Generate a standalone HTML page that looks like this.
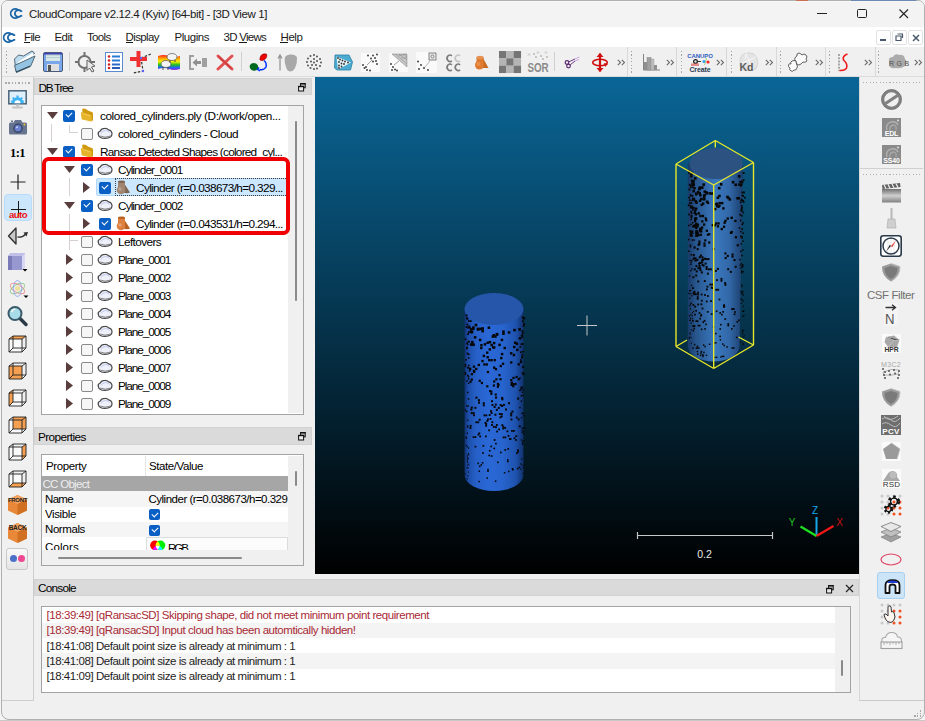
<!DOCTYPE html><html><head><meta charset="utf-8"><style>
*{margin:0;padding:0;box-sizing:border-box}
html,body{width:925px;height:721px;overflow:hidden;background:#f4f4f4}
body{font-family:"Liberation Sans",sans-serif;font-size:11px;color:#000;position:relative;letter-spacing:-0.1px}
.a{position:absolute}
.t{position:absolute;white-space:nowrap;line-height:13px}
.hdr{position:absolute;background:#dadada;border:1px solid #d2d2d2}
svg{position:absolute;overflow:visible}
.cb{position:absolute;width:12px;height:12px;border-radius:2px}
.cbon{background:#0a5fc4}
.cboff{background:#f6f6f6;border:1px solid #8a8a8a}
.cbon:after{content:"";position:absolute;left:3px;top:2.5px;width:5px;height:3px;border-left:1.3px solid #fff;border-bottom:1.3px solid #fff;transform:rotate(-45deg)}
.chev{position:absolute;font-size:12px;color:#505050;letter-spacing:-2px}
</style></head><body>
<div class="a" style="left:0;top:720px;width:925px;height:1px;background:#c8c8c8"></div>
<div class="a" style="left:1px;top:0;width:924px;height:720px;background:#f0f0f0;border:1px solid #b0b0b0;border-radius:7px 7px 8px 8px"></div>
<div class="a" style="left:2px;top:1px;width:922px;height:26px;background:#f3f3f3;border-radius:6px 6px 0 0;border-top:1px solid #f8f8f8"></div>
<div class="a" style="left:796px;top:0;width:12px;height:1px;background:#c87050"></div>
<div class="a" style="left:851px;top:0;width:65px;height:1px;background:#6a88b0"></div>
<div class="t" style="left:29px;top:8px;font-size:11.5px;color:#1a1a1a;letter-spacing:-0.400px;">CloudCompare v2.12.4 (Kyiv) [64-bit] - [3D View 1]</div>
<svg style="left:10px;top:8px" width="13" height="11" viewBox="0 0 13 11"><path d="M8.09 2.05 A4.5 4.5 0 1 0 8.09 8.95" fill="none" stroke="#1a66a8" stroke-width="1.8"/><path d="M12.2 3.03 L10.87 3.03 A3.5 3.5 0 1 0 10.87 7.97 L12.2 7.97" fill="none" stroke="#1a66a8" stroke-width="1.8"/></svg>
<div class="a" style="left:817px;top:13px;width:9.5px;height:1.3px;background:#222"></div>
<div class="a" style="left:857px;top:9px;width:10px;height:9px;border:1.5px solid #222;border-radius:1.5px"></div>
<svg style="left:899px;top:9px" width="9.5" height="9.5"><path d="M0.5 0.5 L9 9 M9 0.5 L0.5 9" stroke="#222" stroke-width="1.1"/></svg>
<div class="a" style="left:2px;top:27px;width:922px;height:20px;background:#fff"></div>
<svg style="left:3px;top:31.5px" width="13" height="11" viewBox="0 0 13 11"><path d="M8.09 2.05 A4.5 4.5 0 1 0 8.09 8.95" fill="none" stroke="#1a66a8" stroke-width="1.8"/><path d="M12.2 3.03 L10.87 3.03 A3.5 3.5 0 1 0 10.87 7.97 L12.2 7.97" fill="none" stroke="#1a66a8" stroke-width="1.8"/></svg>
<div class="t" style="left:24px;top:31px;font-size:11.5px;color:#1a1a1a;letter-spacing:-0.633px;">File</div>
<div class="t" style="left:54.5px;top:31px;font-size:11.5px;color:#1a1a1a;letter-spacing:-0.579px;">Edit</div>
<div class="t" style="left:87px;top:31px;font-size:11.5px;color:#1a1a1a;letter-spacing:-0.669px;">Tools</div>
<div class="t" style="left:125.5px;top:31px;font-size:11.5px;color:#1a1a1a;letter-spacing:-0.601px;">Display</div>
<div class="t" style="left:174.5px;top:31px;font-size:11.5px;color:#1a1a1a;letter-spacing:-0.460px;">Plugins</div>
<div class="t" style="left:223.5px;top:31px;font-size:11.5px;color:#1a1a1a;letter-spacing:-0.733px;">3D Views</div>
<div class="t" style="left:280.5px;top:31px;font-size:11.5px;color:#1a1a1a;letter-spacing:-0.413px;">Help</div>
<div class="a" style="left:24px;top:42px;width:6px;height:1px;background:#1a1a1a"></div>
<div class="a" style="left:125.5px;top:42px;width:7px;height:1px;background:#1a1a1a"></div>
<div class="a" style="left:238.7px;top:42px;width:8px;height:1px;background:#1a1a1a"></div>
<div class="a" style="left:280.4px;top:42px;width:8px;height:1px;background:#1a1a1a"></div>
<div class="a" style="left:876px;top:30px;width:15px;height:15px;border:1px solid #e2e2e2;border-radius:2px;background:#fff"></div>
<div class="a" style="left:892px;top:30px;width:15px;height:15px;border:1px solid #e2e2e2;border-radius:2px;background:#fff"></div>
<div class="a" style="left:908px;top:30px;width:15px;height:15px;border:1px solid #e2e2e2;border-radius:2px;background:#fff"></div>
<div class="a" style="left:880px;top:39px;width:6px;height:1.6px;background:#4a5a6a"></div>
<svg style="left:895px;top:33px" width="9" height="9"><path d="M2.5 1 H7.5 V5 M1 3 H6 V7.5 H1 Z" fill="none" stroke="#4a5a6a" stroke-width="1.2"/></svg>
<svg style="left:911.5px;top:33.5px" width="8" height="8"><path d="M1 1 L7 7 M7 1 L1 7" stroke="#4a5a6a" stroke-width="1.5"/></svg>
<div class="a" style="left:2px;top:47px;width:922px;height:30px;background:#f0f0f0;border-bottom:1px solid #dcdcdc"></div>
<div class="a" style="left:6px;top:51.0px;width:1.2px;height:1.2px;background:#a4a4a4"></div><div class="a" style="left:6px;top:54.4px;width:1.2px;height:1.2px;background:#a4a4a4"></div><div class="a" style="left:6px;top:57.8px;width:1.2px;height:1.2px;background:#a4a4a4"></div><div class="a" style="left:6px;top:61.2px;width:1.2px;height:1.2px;background:#a4a4a4"></div><div class="a" style="left:6px;top:64.6px;width:1.2px;height:1.2px;background:#a4a4a4"></div><div class="a" style="left:6px;top:68.0px;width:1.2px;height:1.2px;background:#a4a4a4"></div><div class="a" style="left:6px;top:71.4px;width:1.2px;height:1.2px;background:#a4a4a4"></div>
<svg style="left:13px;top:50px" width="24" height="24" viewBox="0 0 24 24"><path d="M1.5 9 L5.5 5 L10.5 6 L19 1 L21.5 3 L8.5 18.5 L3 21.5 Z" fill="#bcdcee" stroke="#506878" stroke-width="1"/>
<path d="M5 12 L19.5 3 L21 5 L7 16 Z" fill="#fff"/>
<path d="M1.5 15.5 L22 6 L17.5 16.5 L3.5 22.5 Z" fill="#94c4e2" stroke="#506878" stroke-width="1"/>
<path d="M3 22 L17 16" stroke="#2a4050" stroke-width="1"/></svg>
<svg style="left:42.5px;top:52px" width="20" height="20" viewBox="0 0 20 20"><rect x="0.5" y="0.5" width="19" height="19" rx="1.5" fill="#7aa6ea" stroke="#4a5a7a" stroke-width="1"/>
<rect x="3" y="1" width="14" height="8" fill="#d8e8e8"/><rect x="3" y="2.5" width="14" height="1" fill="#b0c8c8"/><rect x="3" y="5" width="14" height="1" fill="#b8d0d0"/>
<rect x="4" y="12" width="12" height="7" fill="#e0e0e0"/><rect x="5" y="13" width="3" height="6" fill="#555"/>
<rect x="1" y="1" width="18" height="1.5" fill="#4040b0"/></svg>
<div class="a" style="left:69px;top:52px;width:1px;height:19px;background:#d0d0d0"></div>
<svg style="left:75px;top:51px" width="22" height="22" viewBox="0 0 22 22"><circle cx="9.5" cy="11" r="6" fill="none" stroke="#707070" stroke-width="2"/>
<path d="M9.5 1 V5 M9.5 17 V21 M0 11 H3.5 M15.5 11 H20" stroke="#707070" stroke-width="2"/>
<path d="M12 9 L20 15 L16.5 16 L19 20 L17 21 L14.5 17 L12 19.5 Z" fill="#e8e8e8" stroke="#606060" stroke-width="1"/></svg>
<svg style="left:104.5px;top:52px" width="18" height="20" viewBox="0 0 18 20"><rect x="0.5" y="0.5" width="17" height="19" fill="#fff" stroke="#5a8ad0" stroke-width="1"/>
<circle cx="4" cy="4.5" r="1.3" fill="#d02020"/><circle cx="4" cy="8.5" r="1.3" fill="#d02020"/><circle cx="4" cy="12.5" r="1.3" fill="#d02020"/><circle cx="4" cy="16" r="1.3" fill="#d02020"/>
<rect x="7" y="3.5" width="8" height="2" fill="#2a7ad8"/><rect x="7" y="7.5" width="8" height="2" fill="#2a7ad8"/><rect x="7" y="11.5" width="8" height="2" fill="#2a6ac8"/><rect x="7" y="15" width="8" height="2" fill="#2a5ab8"/></svg>
<svg style="left:130px;top:51px" width="23" height="22" viewBox="0 0 23 22"><path d="M11 7 L21 3 M11 7 L13 20 L3 22" fill="none" stroke="#333" stroke-width="1.2" stroke-dasharray="2.5 1.5"/>
<rect x="6.5" y="0" width="4" height="16" fill="#f03030"/><rect x="0" y="6" width="17" height="4" fill="#f03030"/>
<circle cx="11" cy="7" r="1.2" fill="#6060ff"/><circle cx="13" cy="20" r="1.2" fill="#6060ff"/></svg>
<svg style="left:158px;top:52px" width="22" height="19" viewBox="0 0 22 19"><defs><linearGradient id="rb" x1="0" y1="0" x2="0" y2="1"><stop offset="0" stop-color="#ff2020"/><stop offset="0.25" stop-color="#ffb000"/><stop offset="0.45" stop-color="#f0f000"/><stop offset="0.65" stop-color="#20c020"/><stop offset="0.85" stop-color="#2060ff"/><stop offset="1" stop-color="#a020d0"/></linearGradient></defs>
<path d="M0 4 Q6 2 11 4 T22 4 V17 Q16 19 11 17 T0 17 Z" fill="url(#rb)"/>
<ellipse cx="14" cy="5" rx="5" ry="3.5" fill="#f4f4f4" stroke="#555" stroke-width="0.7"/><ellipse cx="8" cy="12" rx="5" ry="3.5" fill="#f4f4f4" stroke="#555" stroke-width="0.7"/>
<path d="M5 15 V18 M10 15 V18 M12 8 V11 M17 8 V10" stroke="#444" stroke-width="0.9"/></svg>
<svg style="left:188px;top:54px" width="20" height="17" viewBox="0 0 20 17"><path d="M1 1 H6 V3 H3 V14 H6 V16 H1 Z" fill="#a0a0a0"/><rect x="14" y="4" width="5" height="9" fill="#a0a0a0"/>
<path d="M4.5 8.5 L9 4.5 V7 H13 V10 H9 V12.5 Z" fill="#909090"/></svg>
<svg style="left:216px;top:53.5px" width="18" height="17" viewBox="0 0 18 17"><path d="M2 2 L16 15 M16 2 L2 15" stroke="#e05050" stroke-width="3" stroke-linecap="round"/><path d="M2.5 2.5 L15.5 14.5" stroke="#c03030" stroke-width="1"/></svg>
<div class="a" style="left:241px;top:52px;width:1px;height:19px;background:#d0d0d0"></div>
<svg style="left:248.5px;top:52.5px" width="19" height="19" viewBox="0 0 19 19"><path d="M11 5 Q12 0 17.5 1 Q19 5 14 7.5 Q10 8 11 5 Z" fill="#ee0000" stroke="#700" stroke-width="0.5"/>
<path d="M1 12 Q3 9 7 10.5 Q10 12 9 16 Q6 19 2.5 17 Q0 15 1 12 Z" fill="#006a20"/>
<path d="M15 7.5 Q18 10 17 14 Q15 17.5 10.5 16.5" fill="none" stroke="#0030ff" stroke-width="1.5"/><path d="M10 14.5 L8.5 16.5 L11 18" fill="none" stroke="#0030ff" stroke-width="1.3"/></svg>
<svg style="left:277.5px;top:52.5px" width="20" height="19" viewBox="0 0 20 19"><path d="M2 17.5 V3 M0 5.5 L2 2 L4 5.5" fill="none" stroke="#909090" stroke-width="1.2"/>
<path d="M7 4 Q9 1 13 1.5 Q17 1 19 4 Q19.5 10 17 15 Q15 18.5 12 18.5 Q9 18 8 14 Q6 8 7 4 Z" fill="#a8a8a8"/></svg>
<svg style="left:305.5px;top:53.5px" width="17" height="17" viewBox="0 0 17 17"><circle cx="8" cy="1" r="1" fill="#555"/><circle cx="11" cy="2.5" r="1" fill="#555"/><circle cx="14" cy="5" r="1" fill="#555"/><circle cx="15" cy="8.5" r="1" fill="#555"/><circle cx="14" cy="12" r="1" fill="#555"/><circle cx="11" cy="14.5" r="1" fill="#555"/><circle cx="8" cy="15" r="1" fill="#555"/><circle cx="4.5" cy="14" r="1" fill="#555"/><circle cx="2" cy="11.5" r="1" fill="#555"/><circle cx="1" cy="8" r="1" fill="#555"/><circle cx="2" cy="4.5" r="1" fill="#555"/><circle cx="4.5" cy="2" r="1" fill="#555"/><circle cx="8" cy="5" r="1" fill="#555"/><circle cx="11" cy="7" r="1" fill="#555"/><circle cx="10" cy="11" r="1" fill="#555"/><circle cx="6" cy="11" r="1" fill="#555"/><circle cx="5" cy="7.5" r="1" fill="#555"/><circle cx="8" cy="8.5" r="1" fill="#555"/></svg>
<svg style="left:334px;top:53.5px" width="19" height="17" viewBox="0 0 19 17"><path d="M1 1 H15 L18.5 8 L16.5 16 H3 L0.5 14 Z" fill="#4aaad0" stroke="#2a80a8" stroke-width="0.8"/>
<path d="M2.5 2.5 L17 8.5 L4 15.5 Z" fill="#e8f6fa"/><circle cx="4" cy="4" r="0.9" fill="#333"/><circle cx="6" cy="5.5" r="0.9" fill="#333"/><circle cx="8.5" cy="6.5" r="0.9" fill="#333"/><circle cx="11" cy="7.5" r="0.9" fill="#333"/><circle cx="14" cy="8.5" r="0.9" fill="#333"/><circle cx="5" cy="8" r="0.9" fill="#333"/><circle cx="7.5" cy="9.5" r="0.9" fill="#333"/><circle cx="10" cy="10" r="0.9" fill="#333"/><circle cx="5" cy="11.5" r="0.9" fill="#333"/><circle cx="7.5" cy="12.5" r="0.9" fill="#333"/><circle cx="5" cy="14" r="0.9" fill="#333"/></svg>
<svg style="left:361px;top:52.5px" width="19" height="19" viewBox="0 0 19 19"><rect width="19" height="19" fill="#fafafa"/><circle cx="7" cy="2.5" r="1" fill="#444"/><circle cx="12" cy="2.5" r="1" fill="#444"/><circle cx="16" cy="1.5" r="1" fill="#444"/><circle cx="10" cy="5.5" r="1" fill="#444"/><circle cx="14" cy="5" r="1" fill="#444"/><circle cx="15" cy="8" r="1" fill="#444"/><circle cx="12" cy="8.5" r="1" fill="#444"/><circle cx="16" cy="11" r="1" fill="#444"/><circle cx="2" cy="12" r="1" fill="#444"/><circle cx="3.5" cy="15" r="1" fill="#444"/><circle cx="6" cy="17" r="1" fill="#444"/><circle cx="9" cy="17.5" r="1" fill="#444"/><circle cx="5" cy="14" r="1" fill="#444"/><path d="M6 12 L11 7" stroke="#888" stroke-width="0.8"/></svg>
<svg style="left:389px;top:52.5px" width="19" height="19" viewBox="0 0 19 19"><rect width="19" height="19" fill="#fafafa"/><path d="M3 1 H18 V14 Z" fill="#c8c8c8" stroke="#888" stroke-width="0.6"/><path d="M6 1 L18 11 M10 1 L18 7 M14 1 L18 4 M18 1 L9 3 M18 5 L12 5" stroke="#888" stroke-width="0.5"/><circle cx="2" cy="11" r="1" fill="#444"/><circle cx="4" cy="14" r="1" fill="#444"/><circle cx="3" cy="17" r="1" fill="#444"/><circle cx="6" cy="16.5" r="1" fill="#444"/><circle cx="8" cy="17.5" r="1" fill="#444"/><path d="M5 12 L10 8" stroke="#888" stroke-width="0.8"/></svg>
<svg style="left:416px;top:51.5px" width="21" height="21" viewBox="0 0 21 21"><rect width="21" height="21" fill="#fafafa"/><rect x="13" y="1" width="7" height="7" fill="#e8e8e8" stroke="#666" stroke-width="0.8"/><circle cx="16.5" cy="4.5" r="1.5" fill="none" stroke="#666" stroke-width="0.7"/><path d="M14 9 L9 15" stroke="#999" stroke-width="0.7"/><circle cx="2" cy="9.5" r="1" fill="#444"/><circle cx="5" cy="13" r="1" fill="#444"/><circle cx="3" cy="17" r="1" fill="#444"/><circle cx="8" cy="16" r="1" fill="#444"/><circle cx="12" cy="18" r="1" fill="#444"/></svg>
<svg style="left:446px;top:53.5px" width="17" height="18" viewBox="0 0 17 18"><path d="M5.86 1.77 A2.9 3.3 0 1 0 5.86 6.83" fill="none" stroke="#7a7a7a" stroke-width="1.7"/><path d="M14.06 1.77 A2.9 3.3 0 1 0 14.06 6.83" fill="none" stroke="#c4c4c4" stroke-width="1.7"/><path d="M5.86 10.77 A2.9 3.3 0 1 0 5.86 15.83" fill="none" stroke="#7a7a7a" stroke-width="1.7"/><path d="M14.06 10.77 A2.9 3.3 0 1 0 14.06 15.83" fill="none" stroke="#7a7a7a" stroke-width="1.7"/></svg>
<svg style="left:474px;top:54.5px" width="15" height="15" viewBox="0 0 15 15"><path d="M9 3 L14.5 13 H7 Z" fill="#c86a20"/><rect x="2.5" y="2" width="7" height="8" fill="#d87a30"/><ellipse cx="6" cy="2.5" rx="3.5" ry="1.8" fill="#e89050"/>
<circle cx="5.5" cy="10" r="4.5" fill="#e07a30"/><circle cx="4.5" cy="9" r="2" fill="#f0a060" opacity="0.6"/></svg>
<svg style="left:499px;top:51px" width="22" height="22" viewBox="0 0 22 22"><rect x="0.00" y="0.00" width="7.4" height="7.4" fill="#757575"/><rect x="7.33" y="0.00" width="7.4" height="7.4" fill="#b4b4b4"/><rect x="14.66" y="0.00" width="7.4" height="7.4" fill="#757575"/><rect x="0.00" y="7.33" width="7.4" height="7.4" fill="#b4b4b4"/><rect x="7.33" y="7.33" width="7.4" height="7.4" fill="#757575"/><rect x="14.66" y="7.33" width="7.4" height="7.4" fill="#b4b4b4"/><rect x="0.00" y="14.66" width="7.4" height="7.4" fill="#757575"/><rect x="7.33" y="14.66" width="7.4" height="7.4" fill="#b4b4b4"/><rect x="14.66" y="14.66" width="7.4" height="7.4" fill="#757575"/></svg>
<svg style="left:526.5px;top:51px" width="22" height="22" viewBox="0 0 22 22"><text x="0.5" y="21" font-family="Liberation Sans" font-weight="bold" font-size="12" fill="#8a8a8a" textLength="21" lengthAdjust="spacingAndGlyphs">SOR</text><path d="M1 2.5 L3 4.5 M3 2.5 L1 4.5" stroke="#aaa" stroke-width="0.6"/><path d="M6 2 L8 4 M8 2 L6 4" stroke="#aaa" stroke-width="0.6"/><path d="M10 0.5 L12 2.5 M12 0.5 L10 2.5" stroke="#aaa" stroke-width="0.6"/><path d="M13 4 L15 6 M15 4 L13 6" stroke="#aaa" stroke-width="0.6"/><path d="M18 0.5 L20 2.5 M20 0.5 L18 2.5" stroke="#aaa" stroke-width="0.6"/><path d="M19 5 L21 7 M21 5 L19 7" stroke="#aaa" stroke-width="0.6"/><path d="M8 5 L10 7 M10 5 L8 7" stroke="#aaa" stroke-width="0.6"/><path d="M15 7 L17 9 M17 7 L15 9" stroke="#aaa" stroke-width="0.6"/></svg>
<div class="a" style="left:554px;top:52px;width:1px;height:19px;background:#d0d0d0"></div>
<svg style="left:564px;top:56px" width="16" height="13" viewBox="0 0 16 13"><circle cx="3" cy="6.5" r="1.8" fill="none" stroke="#5a2a70" stroke-width="1.2"/><circle cx="4.5" cy="10" r="1.8" fill="none" stroke="#5a2a70" stroke-width="1.2"/>
<path d="M4.5 6 L11 3 M6 9 L11 5" stroke="#6a3a80" stroke-width="1"/><path d="M11 3 L15.5 1 M11 5 L15 3.5" stroke="#c8a0e0" stroke-width="0.9"/></svg>
<svg style="left:591px;top:52.5px" width="18" height="19" viewBox="0 0 18 19"><path d="M9 0.5 V18.5" stroke="#d01010" stroke-width="2.2"/><path d="M5.5 4 L9 0 L12.5 4 Z M5.5 15 L9 19 L12.5 15 Z" fill="#d01010"/>
<ellipse cx="9" cy="9.5" rx="7.3" ry="3.2" fill="none" stroke="#d01010" stroke-width="1.6"/><path d="M13 10 L17 11 L14 14 Z" fill="#d01010"/></svg>
<svg style="left:617px;top:58.5px" width="9" height="7" viewBox="0 0 9 7"><path d="M0.8 0.8 L3.5 3.5 L0.8 6.2 M4.8 0.8 L7.5 3.5 L4.8 6.2" fill="none" stroke="#6a6a6a" stroke-width="1.1"/></svg>
<div class="a" style="left:627px;top:47px;width:1px;height:30px;background:#d8d8d8"></div>
<div class="a" style="left:631px;top:51.0px;width:1.2px;height:1.2px;background:#a4a4a4"></div><div class="a" style="left:631px;top:54.4px;width:1.2px;height:1.2px;background:#a4a4a4"></div><div class="a" style="left:631px;top:57.8px;width:1.2px;height:1.2px;background:#a4a4a4"></div><div class="a" style="left:631px;top:61.2px;width:1.2px;height:1.2px;background:#a4a4a4"></div><div class="a" style="left:631px;top:64.6px;width:1.2px;height:1.2px;background:#a4a4a4"></div><div class="a" style="left:631px;top:68.0px;width:1.2px;height:1.2px;background:#a4a4a4"></div><div class="a" style="left:631px;top:71.4px;width:1.2px;height:1.2px;background:#a4a4a4"></div>
<div class="a" style="left:676px;top:47px;width:1px;height:30px;background:#d8d8d8"></div>
<div class="a" style="left:681px;top:51.0px;width:1.2px;height:1.2px;background:#a4a4a4"></div><div class="a" style="left:681px;top:54.4px;width:1.2px;height:1.2px;background:#a4a4a4"></div><div class="a" style="left:681px;top:57.8px;width:1.2px;height:1.2px;background:#a4a4a4"></div><div class="a" style="left:681px;top:61.2px;width:1.2px;height:1.2px;background:#a4a4a4"></div><div class="a" style="left:681px;top:64.6px;width:1.2px;height:1.2px;background:#a4a4a4"></div><div class="a" style="left:681px;top:68.0px;width:1.2px;height:1.2px;background:#a4a4a4"></div><div class="a" style="left:681px;top:71.4px;width:1.2px;height:1.2px;background:#a4a4a4"></div>
<div class="a" style="left:726px;top:47px;width:1px;height:30px;background:#d8d8d8"></div>
<div class="a" style="left:730.5px;top:51.0px;width:1.2px;height:1.2px;background:#a4a4a4"></div><div class="a" style="left:730.5px;top:54.4px;width:1.2px;height:1.2px;background:#a4a4a4"></div><div class="a" style="left:730.5px;top:57.8px;width:1.2px;height:1.2px;background:#a4a4a4"></div><div class="a" style="left:730.5px;top:61.2px;width:1.2px;height:1.2px;background:#a4a4a4"></div><div class="a" style="left:730.5px;top:64.6px;width:1.2px;height:1.2px;background:#a4a4a4"></div><div class="a" style="left:730.5px;top:68.0px;width:1.2px;height:1.2px;background:#a4a4a4"></div><div class="a" style="left:730.5px;top:71.4px;width:1.2px;height:1.2px;background:#a4a4a4"></div>
<div class="a" style="left:776px;top:47px;width:1px;height:30px;background:#d8d8d8"></div>
<div class="a" style="left:780px;top:51.0px;width:1.2px;height:1.2px;background:#a4a4a4"></div><div class="a" style="left:780px;top:54.4px;width:1.2px;height:1.2px;background:#a4a4a4"></div><div class="a" style="left:780px;top:57.8px;width:1.2px;height:1.2px;background:#a4a4a4"></div><div class="a" style="left:780px;top:61.2px;width:1.2px;height:1.2px;background:#a4a4a4"></div><div class="a" style="left:780px;top:64.6px;width:1.2px;height:1.2px;background:#a4a4a4"></div><div class="a" style="left:780px;top:68.0px;width:1.2px;height:1.2px;background:#a4a4a4"></div><div class="a" style="left:780px;top:71.4px;width:1.2px;height:1.2px;background:#a4a4a4"></div>
<div class="a" style="left:825px;top:47px;width:1px;height:30px;background:#d8d8d8"></div>
<div class="a" style="left:829px;top:51.0px;width:1.2px;height:1.2px;background:#a4a4a4"></div><div class="a" style="left:829px;top:54.4px;width:1.2px;height:1.2px;background:#a4a4a4"></div><div class="a" style="left:829px;top:57.8px;width:1.2px;height:1.2px;background:#a4a4a4"></div><div class="a" style="left:829px;top:61.2px;width:1.2px;height:1.2px;background:#a4a4a4"></div><div class="a" style="left:829px;top:64.6px;width:1.2px;height:1.2px;background:#a4a4a4"></div><div class="a" style="left:829px;top:68.0px;width:1.2px;height:1.2px;background:#a4a4a4"></div><div class="a" style="left:829px;top:71.4px;width:1.2px;height:1.2px;background:#a4a4a4"></div>
<div class="a" style="left:875px;top:47px;width:1px;height:30px;background:#d8d8d8"></div>
<div class="a" style="left:878px;top:51.0px;width:1.2px;height:1.2px;background:#a4a4a4"></div><div class="a" style="left:878px;top:54.4px;width:1.2px;height:1.2px;background:#a4a4a4"></div><div class="a" style="left:878px;top:57.8px;width:1.2px;height:1.2px;background:#a4a4a4"></div><div class="a" style="left:878px;top:61.2px;width:1.2px;height:1.2px;background:#a4a4a4"></div><div class="a" style="left:878px;top:64.6px;width:1.2px;height:1.2px;background:#a4a4a4"></div><div class="a" style="left:878px;top:68.0px;width:1.2px;height:1.2px;background:#a4a4a4"></div><div class="a" style="left:878px;top:71.4px;width:1.2px;height:1.2px;background:#a4a4a4"></div>
<svg style="left:642px;top:53px" width="19" height="18" viewBox="0 0 19 18"><path d="M1.5 1 V17 H18" fill="none" stroke="#777" stroke-width="0.9"/><rect x="2" y="9" width="3" height="8" fill="#909090"/><rect x="5" y="4.5" width="4" height="12.5" fill="#a0a0a0" stroke="#888" stroke-width="0.5"/><rect x="9" y="6" width="3" height="11" fill="#bcbcbc" stroke="#999" stroke-width="0.4"/><rect x="12" y="12" width="3" height="5" fill="#909090"/></svg>
<svg style="left:666.3px;top:58.5px" width="9" height="7" viewBox="0 0 9 7"><path d="M0.8 0.8 L3.5 3.5 L0.8 6.2 M4.8 0.8 L7.5 3.5 L4.8 6.2" fill="none" stroke="#6a6a6a" stroke-width="1.1"/></svg>
<svg style="left:687px;top:51px" width="26" height="22" viewBox="0 0 26 22"><text x="13" y="6.5" text-anchor="middle" font-family="Liberation Sans" font-weight="bold" font-size="6" fill="#3060c0">CANUPO</text>
<circle cx="8.5" cy="10.5" r="2.5" fill="#222"/><circle cx="8.5" cy="10.5" r="1.2" fill="#ddd"/><path d="M11 10.5 H14" stroke="#333" stroke-width="1"/>
<circle cx="17" cy="10.5" r="1.5" fill="#30a0f0"/><circle cx="21" cy="11" r="1.6" fill="#ff2020"/><path d="M19.5 7 L17.5 14" stroke="#80c040" stroke-width="0.6"/>
<rect x="4" y="12.5" width="8" height="2.5" fill="#e06060" opacity="0.7"/>
<text x="13" y="20.5" text-anchor="middle" font-family="Liberation Sans" font-weight="bold" font-size="7" fill="#2a3a50">Create</text></svg>
<svg style="left:715.8px;top:58.5px" width="9" height="7" viewBox="0 0 9 7"><path d="M0.8 0.8 L3.5 3.5 L0.8 6.2 M4.8 0.8 L7.5 3.5 L4.8 6.2" fill="none" stroke="#6a6a6a" stroke-width="1.1"/></svg>
<svg style="left:737px;top:51px" width="23" height="22" viewBox="0 0 23 22"><path d="M3 10 Q3 3 10 2 Q17 1 20 7 Q22 13 19 18 Q12 21 5 18 Q2 15 3 10 Z" fill="#e4e4e4" stroke="#cfcfcf" stroke-width="0.8"/>
<path d="M8 3 L12 9 L19 6 M12 9 L14 17 M5 12 L12 9 M10 2 L8 8" stroke="#f8f8f8" stroke-width="0.8" fill="none"/>
<text x="2.5" y="20" font-family="Liberation Sans" font-weight="bold" font-size="10.5" fill="#5e5e5e">Kd</text></svg>
<svg style="left:765.3px;top:58.5px" width="9" height="7" viewBox="0 0 9 7"><path d="M0.8 0.8 L3.5 3.5 L0.8 6.2 M4.8 0.8 L7.5 3.5 L4.8 6.2" fill="none" stroke="#6a6a6a" stroke-width="1.1"/></svg>
<svg style="left:787px;top:51.5px" width="22" height="21" viewBox="0 0 22 21"><path d="M10 2 Q12 0 14 2 L15 3 Q17 1 19 3 Q21 5 19 7 L20 9 Q18 11 16 10 L14 12 Q12 14 10 12 Q8 11 9 9 Q7 8 8 6 Q9 4 10 4 Z" fill="#fafafa" stroke="#505050" stroke-width="0.9"/>
<path d="M5 9 Q7 8 9 9 L9.5 12 Q11 14 10 16 Q9 19 7 18 Q6 20 4 19 Q2 18 3 16 Q1 15 1.5 13 Q2 11 4 12 Q3 10 5 9 Z" fill="#fafafa" stroke="#505050" stroke-width="0.9"/></svg>
<svg style="left:814.6px;top:58.5px" width="9" height="7" viewBox="0 0 9 7"><path d="M0.8 0.8 L3.5 3.5 L0.8 6.2 M4.8 0.8 L7.5 3.5 L4.8 6.2" fill="none" stroke="#6a6a6a" stroke-width="1.1"/></svg>
<svg style="left:836px;top:51.5px" width="16" height="21" viewBox="0 0 16 21"><path d="M3 2 V19" stroke="#888" stroke-width="1.4" stroke-dasharray="2 1.2"/><path d="M11.5 2 Q6 4 7.5 8 Q12 12 10.5 16 Q9 19 3.5 18.5" fill="none" stroke="#f01818" stroke-width="1.6"/></svg>
<svg style="left:864px;top:58.5px" width="9" height="7" viewBox="0 0 9 7"><path d="M0.8 0.8 L3.5 3.5 L0.8 6.2 M4.8 0.8 L7.5 3.5 L4.8 6.2" fill="none" stroke="#6a6a6a" stroke-width="1.1"/></svg>
<svg style="left:886px;top:53px" width="22" height="17" viewBox="0 0 22 17"><path d="M3 9 Q2 4 7 4 Q9 0 13 2 Q18 1 19 6 Q22 9 19 13 Q15 16 10 15 Q4 16 3 12 Z" fill="#9a9a9a" opacity="0.8"/>
<text x="3" y="12.5" font-family="Liberation Sans" font-size="7" fill="#505050" letter-spacing="0.3">R G B</text></svg>
<svg style="left:914px;top:58.5px" width="9" height="7" viewBox="0 0 9 7"><path d="M0.8 0.8 L3.5 3.5 L0.8 6.2 M4.8 0.8 L7.5 3.5 L4.8 6.2" fill="none" stroke="#6a6a6a" stroke-width="1.1"/></svg>
<div class="a" style="left:2px;top:77px;width:32px;height:624px;background:#f0f0f0;border-right:1px solid #cdcdcd;border-bottom:1px solid #cdcdcd"></div>
<div class="a" style="left:5.0px;top:82px;width:1.5px;height:1.5px;background:#ababab"></div>
<div class="a" style="left:8.3px;top:82px;width:1.5px;height:1.5px;background:#ababab"></div>
<div class="a" style="left:11.6px;top:82px;width:1.5px;height:1.5px;background:#ababab"></div>
<div class="a" style="left:14.9px;top:82px;width:1.5px;height:1.5px;background:#ababab"></div>
<div class="a" style="left:18.2px;top:82px;width:1.5px;height:1.5px;background:#ababab"></div>
<div class="a" style="left:21.5px;top:82px;width:1.5px;height:1.5px;background:#ababab"></div>
<div class="a" style="left:24.8px;top:82px;width:1.5px;height:1.5px;background:#ababab"></div>
<div class="a" style="left:28.1px;top:82px;width:1.5px;height:1.5px;background:#ababab"></div>
<svg style="left:7.5px;top:90px" width="19" height="19" viewBox="0 0 19 19"><rect x="0.8" y="0.8" width="17.4" height="13" fill="#e0f0fa" stroke="#4a6478" stroke-width="1.5"/>
<path d="M3.5 13.3 A6 6 0 0 1 15.5 13.3 Z" fill="#40b4f4"/>
<path d="M9.5 5.5 V8 M5 7.5 L6.3 9.5 M14 7.5 L12.7 9.5 M3.2 11.2 L5.2 12 M15.8 11.2 L13.8 12" stroke="#40b4f4" stroke-width="2.2"/>
<path d="M6.5 13.3 A3 3 0 0 1 12.5 13.3 Z" fill="#fff"/>
<rect x="8" y="14.5" width="3" height="2" fill="#c4c4c4"/><rect x="4" y="16.5" width="11" height="2" rx="1" fill="#c4c4c4"/></svg>
<svg style="left:7.5px;top:118.5px" width="20" height="16" viewBox="0 0 20 16"><path d="M1 5 Q1 3.5 2.5 3.5 H5.5 L7 1 H13 L14.5 3.5 H17.5 Q19 3.5 19 5 V14 Q19 15.5 17.5 15.5 H2.5 Q1 15.5 1 14 Z" fill="#66748f"/>
<rect x="3" y="1.5" width="2" height="1.5" fill="#66748f"/>
<circle cx="10" cy="9.3" r="4.8" fill="#3a4868"/><circle cx="10" cy="9.3" r="3.3" fill="#6a80d0"/><circle cx="9" cy="8.3" r="1" fill="#c0d0ff"/>
<circle cx="16.5" cy="5.5" r="1" fill="#f0c020"/></svg>
<div class="t" style="left:10px;top:146px;font-family:'Liberation Serif',serif;font-weight:bold;font-size:12.5px;letter-spacing:-0.6px;line-height:14px">1:1</div>
<svg style="left:9.5px;top:173.5px" width="16" height="16" viewBox="0 0 16 16"><path d="M8 0.5 V15.5 M0.5 8 H15.5" stroke="#222" stroke-width="1.2"/></svg>
<div class="a" style="left:4px;top:194px;width:27.5px;height:26.5px;background:#cce6fc;border:1.5px solid #b8dcfc;border-radius:4px"></div>
<svg style="left:11px;top:201px" width="16" height="16" viewBox="0 0 16 16"><path d="M7.5 0 V15.5 M0 8.5 H15" stroke="#1a1a1a" stroke-width="1"/></svg>
<div class="t" style="left:9px;top:208.5px;font-size:9.6px;color:#f01010;letter-spacing:-0.588px;font-weight:bold;line-height:11px">auto</div>
<svg style="left:6.5px;top:226.5px" width="22" height="18" viewBox="0 0 22 18"><path d="M9 1 L1.5 9 L9 17 Z" fill="#c8c8c8" stroke="#303030" stroke-width="1.3" stroke-linejoin="round"/>
<path d="M10.5 10 Q15 11 19.5 6.5" fill="none" stroke="#303030" stroke-width="1.3"/><path d="M16.5 5.5 L21 5 L19.5 9.5 Z" fill="#303030"/></svg>
<svg style="left:7px;top:251.5px" width="21" height="21" viewBox="0 0 21 21"><path d="M1 4 L4 1 H18 V15 L15 18 H1 Z" fill="#8a8ac8"/>
<path d="M4 1 H18 L15 4 H1 Z" fill="#c0c0e8"/><path d="M15 4 L18 1 V15 L15 18 Z" fill="#d8d8f4"/>
<rect x="1" y="4" width="14" height="14" fill="#9898d0"/><rect x="1" y="4" width="4" height="14" fill="#7a7ab8"/>
<path d="M15.5 17 H20.5 L18 19.5 Z" fill="#000"/></svg>
<svg style="left:7.5px;top:279px" width="21" height="21" viewBox="0 0 21 21"><ellipse cx="9.5" cy="9.5" rx="8" ry="4" fill="none" stroke="#f07070" stroke-width="0.9" opacity="0.7" transform="rotate(30 9.5 9.5)"/>
<ellipse cx="9.5" cy="9.5" rx="8" ry="4" fill="none" stroke="#70c070" stroke-width="0.9" opacity="0.7" transform="rotate(-30 9.5 9.5)"/>
<ellipse cx="9.5" cy="9.5" rx="8" ry="4" fill="none" stroke="#7090f0" stroke-width="0.9" opacity="0.7" transform="rotate(90 9.5 9.5)"/>
<circle cx="9.5" cy="9.5" r="2.5" fill="#f0e0a0"/><path d="M15.5 16.5 H20.5 L18 19 Z" fill="#000"/></svg>
<svg style="left:7px;top:305px" width="21" height="22" viewBox="0 0 21 22"><path d="M12.5 13 L19 19.5" stroke="#2a3a48" stroke-width="3.5" stroke-linecap="round"/>
<circle cx="8" cy="8.5" r="6.5" fill="#a8dce8" stroke="#3a5a6a" stroke-width="2"/><path d="M4.5 7 Q5.5 4.5 8 4.2" fill="none" stroke="#fff" stroke-width="1.3"/></svg>
<svg style="left:7.5px;top:334.5px" width="20" height="18" viewBox="0 0 20 18"><rect x="1" y="4" width="13" height="13" fill="#fff" opacity="0.6"/><path d="M1 4 L5 1 H18 L14 4 Z" fill="#f4a050"/>
<path d="M1 4 H14 V17 H1 Z M5 1 H18 V13 H5 Z M1 4 L5 1 M14 4 L18 1 M14 17 L18 13 M1 17 L5 13" fill="none" stroke="#202020" stroke-width="0.9"/></svg>
<svg style="left:7.5px;top:361.5px" width="20" height="18" viewBox="0 0 20 18"><rect x="1" y="4" width="13" height="13" fill="#fff" opacity="0.6"/><path d="M1 4 H14 V17 H1 Z" fill="#f4a050"/>
<path d="M1 4 H14 V17 H1 Z M5 1 H18 V13 H5 Z M1 4 L5 1 M14 4 L18 1 M14 17 L18 13 M1 17 L5 13" fill="none" stroke="#202020" stroke-width="0.9"/></svg>
<svg style="left:7.5px;top:388.5px" width="20" height="18" viewBox="0 0 20 18"><rect x="1" y="4" width="13" height="13" fill="#fff" opacity="0.6"/><path d="M1 4 L5 1 V13 L1 17 Z" fill="#f4a050"/>
<path d="M1 4 H14 V17 H1 Z M5 1 H18 V13 H5 Z M1 4 L5 1 M14 4 L18 1 M14 17 L18 13 M1 17 L5 13" fill="none" stroke="#202020" stroke-width="0.9"/></svg>
<svg style="left:7.5px;top:415.5px" width="20" height="18" viewBox="0 0 20 18"><rect x="1" y="4" width="13" height="13" fill="#fff" opacity="0.6"/><path d="M5 1 H18 V13 H5 Z" fill="#f4a050"/>
<path d="M1 4 H14 V17 H1 Z M5 1 H18 V13 H5 Z M1 4 L5 1 M14 4 L18 1 M14 17 L18 13 M1 17 L5 13" fill="none" stroke="#202020" stroke-width="0.9"/></svg>
<svg style="left:7.5px;top:442.5px" width="20" height="18" viewBox="0 0 20 18"><rect x="1" y="4" width="13" height="13" fill="#fff" opacity="0.6"/><path d="M14 4 L18 1 V13 L14 17 Z" fill="#f4a050"/>
<path d="M1 4 H14 V17 H1 Z M5 1 H18 V13 H5 Z M1 4 L5 1 M14 4 L18 1 M14 17 L18 13 M1 17 L5 13" fill="none" stroke="#202020" stroke-width="0.9"/></svg>
<svg style="left:7.5px;top:469.5px" width="20" height="18" viewBox="0 0 20 18"><rect x="1" y="4" width="13" height="13" fill="#fff" opacity="0.6"/><path d="M1 17 L5 13 H18 L14 17 Z" fill="#f4a050"/>
<path d="M1 4 H14 V17 H1 Z M5 1 H18 V13 H5 Z M1 4 L5 1 M14 4 L18 1 M14 17 L18 13 M1 17 L5 13" fill="none" stroke="#202020" stroke-width="0.9"/></svg>
<svg style="left:7px;top:494px" width="21" height="22" viewBox="0 0 21 22"><path d="M10.5 1 L20 5.5 V16.5 L10.5 21 L1 16.5 V5.5 Z" fill="#e88838"/>
<path d="M10.5 1 L20 5.5 L10.5 10 L1 5.5 Z" fill="#f4a460"/><path d="M10.5 10 L20 5.5 V16.5 L10.5 21 Z" fill="#d07020"/>
<text x="10.5" y="8" text-anchor="middle" font-family="Liberation Sans" font-weight="bold" font-size="6" fill="#222" letter-spacing="-0.3">FRONT</text></svg>
<svg style="left:7px;top:521.5px" width="21" height="22" viewBox="0 0 21 22"><path d="M10.5 1 L20 5.5 V16.5 L10.5 21 L1 16.5 V5.5 Z" fill="#e88838"/>
<path d="M10.5 1 L20 5.5 L10.5 10 L1 5.5 Z" fill="#f4a460"/><path d="M10.5 10 L20 5.5 V16.5 L10.5 21 Z" fill="#d07020"/>
<text x="10.5" y="8" text-anchor="middle" font-family="Liberation Sans" font-weight="bold" font-size="6.5" fill="#222" letter-spacing="-0.3">BACK</text></svg>
<div class="a" style="left:6px;top:548px;width:22px;height:22px;background:linear-gradient(#f8f8f8,#e4e4e4);border:1px solid #c8c8c8;border-radius:3px"></div>
<div class="a" style="left:9.5px;top:555px;width:7px;height:7px;border-radius:50%;background:#4a70c8"></div>
<div class="a" style="left:17.5px;top:555px;width:7px;height:7px;border-radius:50%;background:#f04890"></div>
<div class="hdr" style="left:34px;top:78px;width:278px;height:17px"></div>
<div class="t" style="left:38.5px;top:81.5px;font-size:11.8px;color:#000;letter-spacing:-1.312px;">DB Tree</div>
<svg style="left:297px;top:82px" width="10" height="10" viewBox="0 0 10 10"><rect x="3.6" y="1.6" width="4.6" height="4.2" fill="#b8b8b8" stroke="#111" stroke-width="1"/><rect x="3.1" y="1.1" width="5.6" height="1.3" fill="#111"/><rect x="1.6" y="4.4" width="5" height="4.6" fill="#eaeaea" stroke="#111" stroke-width="1"/><rect x="1.1" y="3.9" width="6" height="1.3" fill="#111"/></svg>
<div class="a" style="left:41px;top:105px;width:263px;height:310px;background:#fff;border:1px solid #a3a3a3"></div>
<div class="a" style="left:288px;top:106px;width:15px;height:307px;background:#f0f0f0"></div>
<div class="a" style="left:294.5px;top:121px;width:2px;height:180px;background:#8a8a8a;border-radius:1px"></div>
<div class="a" style="left:96px;top:178px;width:192px;height:18px;background:#cce8ff;border:1px solid #b0d8fa;border-radius:2px 0 0 2px"></div>
<div class="a" style="left:115px;top:178px;width:173px;height:18px;border:1px dotted #404040"></div>
<div class="a" style="left:51px;top:124px;width:1px;height:18px;background:#d6d0d0"></div>
<div class="a" style="left:69px;top:125px;width:1px;height:8px;background:#d6d0d0"></div>
<div class="a" style="left:69px;top:132px;width:9px;height:1px;background:#d6d0d0"></div>
<div class="a" style="left:69px;top:178px;width:1px;height:18px;background:#d6d0d0"></div>
<div class="a" style="left:69px;top:214px;width:1px;height:36px;background:#d6d0d0"></div>
<div class="a" style="left:69px;top:240px;width:9px;height:1px;background:#d6d0d0"></div>
<svg style="left:46.5px;top:111.5px" width="11" height="7"><path d="M0 0 H11 L5.5 7 Z" fill="#5a3e3e"/></svg>
<div class="cb cbon" style="left:63px;top:109.5px"></div>
<svg style="left:80px;top:108px" width="14" height="14" viewBox="0 0 14 14"><path d="M2.2 1.2 Q2.5 0.5 3.5 0.6 L6 0.9 L8 2.6 L12.3 4.3 Q13 4.6 13 5.5 V12.8 L3 11 Z" fill="#d09a10"/><path d="M0.8 4.8 Q0.8 4 1.8 4.2 L10.5 6.8 Q11.5 7.2 11.5 8.2 V13.3 Q11.5 13.8 10.8 13.6 L2.2 11.6 Q1.5 11.4 1.5 10.6 Z" fill="#e6b42a"/><path d="M2.5 5.5 L10 7.8" stroke="#f4d060" stroke-width="0.8"/></svg>
<div class="t" style="left:100px;top:110px;font-size:11.8px;color:#000;letter-spacing:-0.426px;">colored_cylinders.ply (D:/work/open...</div>
<div class="cb cboff" style="left:81px;top:127.5px"></div>
<svg style="left:97px;top:127px" width="16" height="12" viewBox="0 0 16 12"><path d="M1.3 7.5 Q0.6 4.8 3.3 4 Q4.3 1.3 7.8 1.3 Q10.2 1.1 11.6 2.8 Q14.8 3.4 15 6.8 Q15 11.3 8 11.4 Q1.8 11.4 1.3 7.5 Z" fill="#eef0fa" stroke="#4a4a4a" stroke-width="1.25"/><path d="M4 6.5 Q5 3.8 8.5 3.5 Q11 3.5 12.5 5.5" fill="none" stroke="#c0c8ee" stroke-width="1"/><path d="M2.8 9 Q8 11.3 13.8 9" fill="none" stroke="#7a7a7a" stroke-width="0.9"/></svg>
<div class="t" style="left:118px;top:128px;font-size:11.8px;color:#000;letter-spacing:-0.524px;">colored_cylinders - Cloud</div>
<svg style="left:46.5px;top:147.5px" width="11" height="7"><path d="M0 0 H11 L5.5 7 Z" fill="#5a3e3e"/></svg>
<div class="cb cbon" style="left:63px;top:145.5px"></div>
<svg style="left:80px;top:144px" width="14" height="14" viewBox="0 0 14 14"><path d="M2.2 1.2 Q2.5 0.5 3.5 0.6 L6 0.9 L8 2.6 L12.3 4.3 Q13 4.6 13 5.5 V12.8 L3 11 Z" fill="#d09a10"/><path d="M0.8 4.8 Q0.8 4 1.8 4.2 L10.5 6.8 Q11.5 7.2 11.5 8.2 V13.3 Q11.5 13.8 10.8 13.6 L2.2 11.6 Q1.5 11.4 1.5 10.6 Z" fill="#e6b42a"/><path d="M2.5 5.5 L10 7.8" stroke="#f4d060" stroke-width="0.8"/></svg>
<div class="t" style="left:100px;top:146px;font-size:11.8px;color:#000;letter-spacing:-0.750px;">Ransac Detected Shapes (colored_cyl...</div>
<svg style="left:64.0px;top:165.5px" width="11" height="7"><path d="M0 0 H11 L5.5 7 Z" fill="#5a3e3e"/></svg>
<div class="cb cbon" style="left:81px;top:163.5px"></div>
<svg style="left:97px;top:163px" width="16" height="12" viewBox="0 0 16 12"><path d="M1.3 7.5 Q0.6 4.8 3.3 4 Q4.3 1.3 7.8 1.3 Q10.2 1.1 11.6 2.8 Q14.8 3.4 15 6.8 Q15 11.3 8 11.4 Q1.8 11.4 1.3 7.5 Z" fill="#eef0fa" stroke="#4a4a4a" stroke-width="1.25"/><path d="M4 6.5 Q5 3.8 8.5 3.5 Q11 3.5 12.5 5.5" fill="none" stroke="#c0c8ee" stroke-width="1"/><path d="M2.8 9 Q8 11.3 13.8 9" fill="none" stroke="#7a7a7a" stroke-width="0.9"/></svg>
<div class="t" style="left:118px;top:164px;font-size:11.8px;color:#000;letter-spacing:-0.890px;">Cylinder_0001</div>
<svg style="left:83.2px;top:181.5px" width="7" height="11"><path d="M0 0 V11 L7 5.5 Z" fill="#5a3e3e"/></svg>
<div class="cb cbon" style="left:99px;top:181.5px"></div>
<svg style="left:116px;top:180px" width="15" height="15" viewBox="0 0 15 15"><path d="M8.5 4 L14 12.5 Q11 14 7 12.5 Z" fill="#806650"/><rect x="2" y="1.5" width="7" height="8" fill="#a08670"/><ellipse cx="5.5" cy="1.8" rx="3.5" ry="1.3" fill="#806650"/><circle cx="5" cy="10" r="4.3" fill="#a08670"/><circle cx="4" cy="9" r="1.8" fill="#fff" opacity="0.25"/></svg>
<div class="t" style="left:136px;top:182px;font-size:11.8px;color:#000;letter-spacing:-0.641px;">Cylinder (r=0.038673/h=0.329...</div>
<svg style="left:64.0px;top:201.5px" width="11" height="7"><path d="M0 0 H11 L5.5 7 Z" fill="#5a3e3e"/></svg>
<div class="cb cbon" style="left:81px;top:199.5px"></div>
<svg style="left:97px;top:199px" width="16" height="12" viewBox="0 0 16 12"><path d="M1.3 7.5 Q0.6 4.8 3.3 4 Q4.3 1.3 7.8 1.3 Q10.2 1.1 11.6 2.8 Q14.8 3.4 15 6.8 Q15 11.3 8 11.4 Q1.8 11.4 1.3 7.5 Z" fill="#eef0fa" stroke="#4a4a4a" stroke-width="1.25"/><path d="M4 6.5 Q5 3.8 8.5 3.5 Q11 3.5 12.5 5.5" fill="none" stroke="#c0c8ee" stroke-width="1"/><path d="M2.8 9 Q8 11.3 13.8 9" fill="none" stroke="#7a7a7a" stroke-width="0.9"/></svg>
<div class="t" style="left:118px;top:200px;font-size:11.8px;color:#000;letter-spacing:-0.890px;">Cylinder_0002</div>
<svg style="left:83.2px;top:217.5px" width="7" height="11"><path d="M0 0 V11 L7 5.5 Z" fill="#5a3e3e"/></svg>
<div class="cb cbon" style="left:99px;top:217.5px"></div>
<svg style="left:116px;top:216px" width="15" height="15" viewBox="0 0 15 15"><path d="M8.5 4 L14 12.5 Q11 14 7 12.5 Z" fill="#b86020"/><rect x="2" y="1.5" width="7" height="8" fill="#dc8040"/><ellipse cx="5.5" cy="1.8" rx="3.5" ry="1.3" fill="#b86020"/><circle cx="5" cy="10" r="4.3" fill="#dc8040"/><circle cx="4" cy="9" r="1.8" fill="#fff" opacity="0.25"/></svg>
<div class="t" style="left:136px;top:218px;font-size:11.8px;color:#000;letter-spacing:-0.641px;">Cylinder (r=0.043531/h=0.294...</div>
<div class="cb cboff" style="left:81px;top:235.5px"></div>
<svg style="left:97px;top:235px" width="16" height="12" viewBox="0 0 16 12"><path d="M1.3 7.5 Q0.6 4.8 3.3 4 Q4.3 1.3 7.8 1.3 Q10.2 1.1 11.6 2.8 Q14.8 3.4 15 6.8 Q15 11.3 8 11.4 Q1.8 11.4 1.3 7.5 Z" fill="#eef0fa" stroke="#4a4a4a" stroke-width="1.25"/><path d="M4 6.5 Q5 3.8 8.5 3.5 Q11 3.5 12.5 5.5" fill="none" stroke="#c0c8ee" stroke-width="1"/><path d="M2.8 9 Q8 11.3 13.8 9" fill="none" stroke="#7a7a7a" stroke-width="0.9"/></svg>
<div class="t" style="left:118px;top:236px;font-size:11.8px;color:#000;letter-spacing:-0.614px;">Leftovers</div>
<svg style="left:65.7px;top:253.5px" width="7" height="11"><path d="M0 0 V11 L7 5.5 Z" fill="#5a3e3e"/></svg>
<div class="cb cboff" style="left:81px;top:253.5px"></div>
<svg style="left:97px;top:253px" width="16" height="12" viewBox="0 0 16 12"><path d="M1.3 7.5 Q0.6 4.8 3.3 4 Q4.3 1.3 7.8 1.3 Q10.2 1.1 11.6 2.8 Q14.8 3.4 15 6.8 Q15 11.3 8 11.4 Q1.8 11.4 1.3 7.5 Z" fill="#eef0fa" stroke="#4a4a4a" stroke-width="1.25"/><path d="M4 6.5 Q5 3.8 8.5 3.5 Q11 3.5 12.5 5.5" fill="none" stroke="#c0c8ee" stroke-width="1"/><path d="M2.8 9 Q8 11.3 13.8 9" fill="none" stroke="#7a7a7a" stroke-width="0.9"/></svg>
<div class="t" style="left:118px;top:254px;font-size:11.8px;color:#000;letter-spacing:-1.078px;">Plane_0001</div>
<svg style="left:65.7px;top:271.5px" width="7" height="11"><path d="M0 0 V11 L7 5.5 Z" fill="#5a3e3e"/></svg>
<div class="cb cboff" style="left:81px;top:271.5px"></div>
<svg style="left:97px;top:271px" width="16" height="12" viewBox="0 0 16 12"><path d="M1.3 7.5 Q0.6 4.8 3.3 4 Q4.3 1.3 7.8 1.3 Q10.2 1.1 11.6 2.8 Q14.8 3.4 15 6.8 Q15 11.3 8 11.4 Q1.8 11.4 1.3 7.5 Z" fill="#eef0fa" stroke="#4a4a4a" stroke-width="1.25"/><path d="M4 6.5 Q5 3.8 8.5 3.5 Q11 3.5 12.5 5.5" fill="none" stroke="#c0c8ee" stroke-width="1"/><path d="M2.8 9 Q8 11.3 13.8 9" fill="none" stroke="#7a7a7a" stroke-width="0.9"/></svg>
<div class="t" style="left:118px;top:272px;font-size:11.8px;color:#000;letter-spacing:-1.078px;">Plane_0002</div>
<svg style="left:65.7px;top:289.5px" width="7" height="11"><path d="M0 0 V11 L7 5.5 Z" fill="#5a3e3e"/></svg>
<div class="cb cboff" style="left:81px;top:289.5px"></div>
<svg style="left:97px;top:289px" width="16" height="12" viewBox="0 0 16 12"><path d="M1.3 7.5 Q0.6 4.8 3.3 4 Q4.3 1.3 7.8 1.3 Q10.2 1.1 11.6 2.8 Q14.8 3.4 15 6.8 Q15 11.3 8 11.4 Q1.8 11.4 1.3 7.5 Z" fill="#eef0fa" stroke="#4a4a4a" stroke-width="1.25"/><path d="M4 6.5 Q5 3.8 8.5 3.5 Q11 3.5 12.5 5.5" fill="none" stroke="#c0c8ee" stroke-width="1"/><path d="M2.8 9 Q8 11.3 13.8 9" fill="none" stroke="#7a7a7a" stroke-width="0.9"/></svg>
<div class="t" style="left:118px;top:290px;font-size:11.8px;color:#000;letter-spacing:-1.078px;">Plane_0003</div>
<svg style="left:65.7px;top:307.5px" width="7" height="11"><path d="M0 0 V11 L7 5.5 Z" fill="#5a3e3e"/></svg>
<div class="cb cboff" style="left:81px;top:307.5px"></div>
<svg style="left:97px;top:307px" width="16" height="12" viewBox="0 0 16 12"><path d="M1.3 7.5 Q0.6 4.8 3.3 4 Q4.3 1.3 7.8 1.3 Q10.2 1.1 11.6 2.8 Q14.8 3.4 15 6.8 Q15 11.3 8 11.4 Q1.8 11.4 1.3 7.5 Z" fill="#eef0fa" stroke="#4a4a4a" stroke-width="1.25"/><path d="M4 6.5 Q5 3.8 8.5 3.5 Q11 3.5 12.5 5.5" fill="none" stroke="#c0c8ee" stroke-width="1"/><path d="M2.8 9 Q8 11.3 13.8 9" fill="none" stroke="#7a7a7a" stroke-width="0.9"/></svg>
<div class="t" style="left:118px;top:308px;font-size:11.8px;color:#000;letter-spacing:-1.078px;">Plane_0004</div>
<svg style="left:65.7px;top:325.5px" width="7" height="11"><path d="M0 0 V11 L7 5.5 Z" fill="#5a3e3e"/></svg>
<div class="cb cboff" style="left:81px;top:325.5px"></div>
<svg style="left:97px;top:325px" width="16" height="12" viewBox="0 0 16 12"><path d="M1.3 7.5 Q0.6 4.8 3.3 4 Q4.3 1.3 7.8 1.3 Q10.2 1.1 11.6 2.8 Q14.8 3.4 15 6.8 Q15 11.3 8 11.4 Q1.8 11.4 1.3 7.5 Z" fill="#eef0fa" stroke="#4a4a4a" stroke-width="1.25"/><path d="M4 6.5 Q5 3.8 8.5 3.5 Q11 3.5 12.5 5.5" fill="none" stroke="#c0c8ee" stroke-width="1"/><path d="M2.8 9 Q8 11.3 13.8 9" fill="none" stroke="#7a7a7a" stroke-width="0.9"/></svg>
<div class="t" style="left:118px;top:326px;font-size:11.8px;color:#000;letter-spacing:-1.078px;">Plane_0005</div>
<svg style="left:65.7px;top:343.5px" width="7" height="11"><path d="M0 0 V11 L7 5.5 Z" fill="#5a3e3e"/></svg>
<div class="cb cboff" style="left:81px;top:343.5px"></div>
<svg style="left:97px;top:343px" width="16" height="12" viewBox="0 0 16 12"><path d="M1.3 7.5 Q0.6 4.8 3.3 4 Q4.3 1.3 7.8 1.3 Q10.2 1.1 11.6 2.8 Q14.8 3.4 15 6.8 Q15 11.3 8 11.4 Q1.8 11.4 1.3 7.5 Z" fill="#eef0fa" stroke="#4a4a4a" stroke-width="1.25"/><path d="M4 6.5 Q5 3.8 8.5 3.5 Q11 3.5 12.5 5.5" fill="none" stroke="#c0c8ee" stroke-width="1"/><path d="M2.8 9 Q8 11.3 13.8 9" fill="none" stroke="#7a7a7a" stroke-width="0.9"/></svg>
<div class="t" style="left:118px;top:344px;font-size:11.8px;color:#000;letter-spacing:-1.078px;">Plane_0006</div>
<svg style="left:65.7px;top:361.5px" width="7" height="11"><path d="M0 0 V11 L7 5.5 Z" fill="#5a3e3e"/></svg>
<div class="cb cboff" style="left:81px;top:361.5px"></div>
<svg style="left:97px;top:361px" width="16" height="12" viewBox="0 0 16 12"><path d="M1.3 7.5 Q0.6 4.8 3.3 4 Q4.3 1.3 7.8 1.3 Q10.2 1.1 11.6 2.8 Q14.8 3.4 15 6.8 Q15 11.3 8 11.4 Q1.8 11.4 1.3 7.5 Z" fill="#eef0fa" stroke="#4a4a4a" stroke-width="1.25"/><path d="M4 6.5 Q5 3.8 8.5 3.5 Q11 3.5 12.5 5.5" fill="none" stroke="#c0c8ee" stroke-width="1"/><path d="M2.8 9 Q8 11.3 13.8 9" fill="none" stroke="#7a7a7a" stroke-width="0.9"/></svg>
<div class="t" style="left:118px;top:362px;font-size:11.8px;color:#000;letter-spacing:-1.078px;">Plane_0007</div>
<svg style="left:65.7px;top:379.5px" width="7" height="11"><path d="M0 0 V11 L7 5.5 Z" fill="#5a3e3e"/></svg>
<div class="cb cboff" style="left:81px;top:379.5px"></div>
<svg style="left:97px;top:379px" width="16" height="12" viewBox="0 0 16 12"><path d="M1.3 7.5 Q0.6 4.8 3.3 4 Q4.3 1.3 7.8 1.3 Q10.2 1.1 11.6 2.8 Q14.8 3.4 15 6.8 Q15 11.3 8 11.4 Q1.8 11.4 1.3 7.5 Z" fill="#eef0fa" stroke="#4a4a4a" stroke-width="1.25"/><path d="M4 6.5 Q5 3.8 8.5 3.5 Q11 3.5 12.5 5.5" fill="none" stroke="#c0c8ee" stroke-width="1"/><path d="M2.8 9 Q8 11.3 13.8 9" fill="none" stroke="#7a7a7a" stroke-width="0.9"/></svg>
<div class="t" style="left:118px;top:380px;font-size:11.8px;color:#000;letter-spacing:-1.078px;">Plane_0008</div>
<svg style="left:65.7px;top:397.5px" width="7" height="11"><path d="M0 0 V11 L7 5.5 Z" fill="#5a3e3e"/></svg>
<div class="cb cboff" style="left:81px;top:397.5px"></div>
<svg style="left:97px;top:397px" width="16" height="12" viewBox="0 0 16 12"><path d="M1.3 7.5 Q0.6 4.8 3.3 4 Q4.3 1.3 7.8 1.3 Q10.2 1.1 11.6 2.8 Q14.8 3.4 15 6.8 Q15 11.3 8 11.4 Q1.8 11.4 1.3 7.5 Z" fill="#eef0fa" stroke="#4a4a4a" stroke-width="1.25"/><path d="M4 6.5 Q5 3.8 8.5 3.5 Q11 3.5 12.5 5.5" fill="none" stroke="#c0c8ee" stroke-width="1"/><path d="M2.8 9 Q8 11.3 13.8 9" fill="none" stroke="#7a7a7a" stroke-width="0.9"/></svg>
<div class="t" style="left:118px;top:398px;font-size:11.8px;color:#000;letter-spacing:-1.078px;">Plane_0009</div>
<div class="a" style="left:42px;top:157px;width:247.5px;height:77.5px;border:4.2px solid #f00000;border-radius:6.5px"></div>
<div class="hdr" style="left:34px;top:427px;width:278px;height:18px"></div>
<div class="t" style="left:38px;top:430.5px;font-size:11.8px;color:#000;letter-spacing:-0.597px;">Properties</div>
<svg style="left:297px;top:431px" width="10" height="10" viewBox="0 0 10 10"><rect x="3.6" y="1.6" width="4.6" height="4.2" fill="#b8b8b8" stroke="#111" stroke-width="1"/><rect x="3.1" y="1.1" width="5.6" height="1.3" fill="#111"/><rect x="1.6" y="4.4" width="5" height="4.6" fill="#eaeaea" stroke="#111" stroke-width="1"/><rect x="1.1" y="3.9" width="6" height="1.3" fill="#111"/></svg>
<div class="a" style="left:41px;top:454px;width:263px;height:112px;background:#fff;border:1px solid #a3a3a3"></div>
<div class="a" style="left:42px;top:456px;width:246px;height:94px;overflow:hidden">
<div class="a" style="left:0;top:0px;width:246px;height:20px;background:#fff"></div>
<div class="a" style="left:103px;top:0;width:1px;height:20px;background:#e4e4e4"></div>
<div class="a" style="left:0;top:20px;width:246px;height:15px;background:#a6a6a6"></div>
<div class="a" style="left:0;top:35px;width:246px;height:16px;background:#f5f5f5"></div>
<div class="a" style="left:0;top:51px;width:246px;height:15px;background:#fff"></div>
<div class="a" style="left:0;top:66px;width:246px;height:15px;background:#f5f5f5"></div>
<div class="a" style="left:0;top:81px;width:246px;height:20px;background:#fff"></div>
<div class="a" style="left:104px;top:81px;width:142px;height:20px;border:1px solid #dcdcdc;background:#fcfcfc"></div>
</div>
<div class="t" style="left:46px;top:460px;font-size:11.5px;color:#000;letter-spacing:-0.383px;">Property</div>
<div class="t" style="left:149px;top:460px;font-size:11.5px;color:#000;letter-spacing:-0.419px;">State/Value</div>
<div class="t" style="left:42.5px;top:478px;font-size:11.5px;color:#eeeeee;letter-spacing:-0.705px;">CC Object</div>
<div class="t" style="left:45px;top:493px;font-size:11.5px;color:#000;letter-spacing:-0.669px;">Name</div>
<div class="t" style="left:148.5px;top:493px;font-size:11.5px;color:#000;letter-spacing:-0.496px;">Cylinder (r=0.038673/h=0.329</div>
<div class="t" style="left:45px;top:508px;font-size:11.5px;color:#000;letter-spacing:-0.381px;">Visible</div>
<div class="t" style="left:45px;top:523px;font-size:11.5px;color:#000;letter-spacing:-0.416px;">Normals</div>
<div class="cb cbon" style="left:149px;top:509px;width:11px;height:11px"></div>
<div class="cb cbon" style="left:149px;top:524.5px;width:11px;height:11px"></div>
<div class="a" style="left:43px;top:537px;width:245px;height:13px;overflow:hidden">
<div class="t" style="left:2px;top:4px;font-size:11.5px;letter-spacing:0.1px">Colors</div>
<svg style="left:107px;top:3px" width="16" height="14" viewBox="0 0 16 14"><defs><clipPath id="rc"><circle cx="4.9" cy="5.3" r="4.8"/></clipPath><clipPath id="gc"><circle cx="10.5" cy="5.3" r="4.8"/></clipPath></defs><circle cx="4.9" cy="5.3" r="4.8" fill="#ff0000"/><circle cx="10.5" cy="5.3" r="4.8" fill="#00ee00"/><g clip-path="url(#rc)"><circle cx="10.5" cy="5.3" r="4.8" fill="#ffff00"/><circle cx="7.7" cy="10.5" r="4.8" fill="#ff00ff"/></g><g clip-path="url(#gc)"><circle cx="7.7" cy="10.5" r="4.8" fill="#00ffff"/></g><g clip-path="url(#rc)"><g clip-path="url(#gc)"><circle cx="7.7" cy="10.5" r="4.8" fill="#ffffff"/></g></g></svg>
<div class="t" style="left:125px;top:5px;font-size:11.5px;color:#000;letter-spacing:-1.973px;">RGB</div>
</div>
<div class="a" style="left:288px;top:456px;width:15px;height:94px;background:#f0f0f0"></div>
<div class="a" style="left:294.5px;top:471px;width:2px;height:15px;background:#8a8a8a;border-radius:1px"></div>
<div class="a" style="left:42px;top:550px;width:261px;height:15px;background:#f0f0f0"></div>
<div class="a" style="left:58px;top:557px;width:184px;height:2px;background:#8a8a8a;border-radius:1px"></div>
<div class="a" style="left:315px;top:77px;width:544px;height:497px;background:linear-gradient(#0a6096 0%,#063f66 35%,#03243c 60%,#010a12 90%,#000508 100%)"></div>
<svg style="left:315px;top:77px" width="544" height="497" viewBox="0 0 544 497"><defs>
<linearGradient id="bg" x1="0" y1="0" x2="0" y2="1"><stop offset="0" stop-color="rgb(10,102,151)"/><stop offset="1" stop-color="rgb(0,0,0)"/></linearGradient>
<linearGradient id="c1" x1="0" y1="0" x2="1" y2="0"><stop offset="0" stop-color="#10306e"/><stop offset="0.06" stop-color="#1c4ea8"/><stop offset="0.2" stop-color="#2660c8"/><stop offset="0.4" stop-color="#2a68d6"/><stop offset="0.65" stop-color="#2864ce"/><stop offset="0.87" stop-color="#1e52ae"/><stop offset="1" stop-color="#10306a"/></linearGradient>
<linearGradient id="c2" x1="0" y1="0" x2="1" y2="0"><stop offset="0" stop-color="#183a68"/><stop offset="0.15" stop-color="#28568e"/><stop offset="0.5" stop-color="#3a78be"/><stop offset="0.75" stop-color="#3268a8"/><stop offset="1" stop-color="#1a3c6a"/></linearGradient>
</defs><rect x="0" y="0" width="544" height="497" fill="url(#bg)"/><path d="M149.5 232 V398 A29.5 16 0 0 0 208.5 398 V232 Z" fill="url(#c1)"/><ellipse cx="179" cy="232" rx="29.5" ry="16" fill="#2556aa"/><g fill="#060606"><rect x="152.8" y="276.5" width="1.7" height="1.7"/><rect x="163.0" y="324.7" width="2.0" height="2.0"/><rect x="186.3" y="321.2" width="2.1" height="2.1"/><rect x="205.7" y="323.5" width="1.4" height="1.4"/><rect x="151.0" y="270.7" width="1.7" height="1.7"/><rect x="180.8" y="331.9" width="2.0" height="2.0"/><rect x="182.8" y="329.9" width="2.0" height="2.0"/><rect x="167.8" y="325.2" width="2.0" height="2.0"/><rect x="167.8" y="327.3" width="2.0" height="2.0"/><rect x="185.1" y="279.9" width="2.4" height="2.4"/><rect x="203.3" y="251.1" width="2.6" height="2.6"/><rect x="200.0" y="362.1" width="1.8" height="1.8"/><rect x="176.5" y="327.0" width="2.0" height="2.0"/><rect x="178.6" y="329.0" width="2.0" height="2.0"/><rect x="154.4" y="303.6" width="2.2" height="2.2"/><rect x="188.5" y="269.8" width="2.4" height="2.4"/><rect x="178.6" y="282.0" width="2.3" height="2.3"/><rect x="208.2" y="246.1" width="1.8" height="1.8"/><rect x="200.5" y="298.9" width="2.2" height="2.2"/><rect x="202.7" y="301.1" width="2.2" height="2.2"/><rect x="189.2" y="349.9" width="1.9" height="1.9"/><rect x="150.7" y="249.1" width="1.8" height="1.8"/><rect x="206.9" y="266.2" width="1.7" height="1.7"/><rect x="179.9" y="403.4" width="1.5" height="1.5"/><rect x="204.3" y="300.3" width="1.5" height="1.5"/><rect x="178.0" y="289.5" width="2.3" height="2.3"/><rect x="151.1" y="328.3" width="1.4" height="1.4"/><rect x="152.5" y="328.3" width="1.4" height="1.4"/><rect x="171.4" y="264.5" width="2.5" height="2.5"/><rect x="207.6" y="240.5" width="1.8" height="1.8"/><rect x="205.5" y="311.7" width="1.5" height="1.5"/><rect x="150.6" y="360.8" width="1.2" height="1.2"/><rect x="163.5" y="393.4" width="1.5" height="1.5"/><rect x="195.2" y="335.5" width="2.0" height="2.0"/><rect x="195.2" y="337.4" width="2.0" height="2.0"/><rect x="192.4" y="371.0" width="1.7" height="1.7"/><rect x="150.2" y="282.0" width="1.6" height="1.6"/><rect x="176.0" y="347.0" width="1.9" height="1.9"/><rect x="177.9" y="348.9" width="1.9" height="1.9"/><rect x="163.3" y="403.8" width="1.5" height="1.5"/><rect x="206.2" y="278.9" width="1.7" height="1.7"/><rect x="195.8" y="304.6" width="2.2" height="2.2"/><rect x="193.0" y="393.7" width="1.5" height="1.5"/><rect x="155.8" y="296.1" width="2.2" height="2.2"/><rect x="158.1" y="293.9" width="2.2" height="2.2"/><rect x="155.7" y="301.5" width="2.2" height="2.2"/><rect x="184.4" y="339.4" width="1.9" height="1.9"/><rect x="152.2" y="249.8" width="1.8" height="1.8"/><rect x="154.0" y="249.8" width="1.8" height="1.8"/><rect x="175.3" y="313.6" width="2.1" height="2.1"/><rect x="175.3" y="315.8" width="2.1" height="2.1"/><rect x="197.7" y="276.8" width="2.4" height="2.4"/><rect x="196.7" y="391.0" width="1.6" height="1.6"/><rect x="152.0" y="314.7" width="1.5" height="1.5"/><rect x="159.4" y="329.8" width="2.0" height="2.0"/><rect x="180.0" y="319.5" width="2.1" height="2.1"/><rect x="152.1" y="387.8" width="1.1" height="1.1"/><rect x="153.2" y="386.7" width="1.1" height="1.1"/><rect x="202.1" y="320.5" width="2.1" height="2.1"/><rect x="180.9" y="347.0" width="1.9" height="1.9"/><rect x="203.8" y="348.4" width="1.9" height="1.9"/><rect x="151.7" y="378.4" width="1.2" height="1.2"/><rect x="207.7" y="295.1" width="1.6" height="1.6"/><rect x="207.7" y="296.6" width="1.6" height="1.6"/><rect x="171.5" y="400.3" width="1.5" height="1.5"/><rect x="197.6" y="306.1" width="2.2" height="2.2"/><rect x="205.0" y="282.2" width="1.6" height="1.6"/><rect x="180.0" y="349.2" width="1.9" height="1.9"/><rect x="205.1" y="386.3" width="1.1" height="1.1"/><rect x="206.2" y="387.4" width="1.1" height="1.1"/><rect x="198.6" y="360.3" width="1.8" height="1.8"/><rect x="179.8" y="291.0" width="2.3" height="2.3"/><rect x="151.5" y="240.9" width="1.8" height="1.8"/><rect x="155.7" y="335.1" width="2.0" height="2.0"/><rect x="157.6" y="335.1" width="2.0" height="2.0"/><rect x="151.8" y="266.5" width="1.7" height="1.7"/><rect x="149.7" y="332.5" width="1.4" height="1.4"/><rect x="151.1" y="333.9" width="1.4" height="1.4"/><rect x="206.7" y="314.5" width="1.5" height="1.5"/><rect x="153.0" y="370.5" width="1.2" height="1.2"/><rect x="205.3" y="311.3" width="1.5" height="1.5"/><rect x="206.8" y="309.8" width="1.5" height="1.5"/><rect x="200.8" y="339.6" width="1.9" height="1.9"/><rect x="202.7" y="341.5" width="1.9" height="1.9"/><rect x="170.2" y="346.0" width="1.9" height="1.9"/><rect x="170.2" y="347.9" width="1.9" height="1.9"/><rect x="154.0" y="290.7" width="2.3" height="2.3"/><rect x="175.1" y="333.2" width="2.0" height="2.0"/><rect x="166.8" y="385.0" width="1.6" height="1.6"/><rect x="205.5" y="266.3" width="1.7" height="1.7"/><rect x="155.7" y="253.8" width="2.5" height="2.5"/><rect x="156.1" y="263.9" width="2.5" height="2.5"/><rect x="156.1" y="266.4" width="2.5" height="2.5"/><rect x="152.0" y="289.8" width="1.6" height="1.6"/><rect x="193.0" y="325.2" width="2.0" height="2.0"/><rect x="178.7" y="362.1" width="1.8" height="1.8"/><rect x="196.5" y="333.6" width="2.0" height="2.0"/><rect x="201.0" y="375.4" width="1.7" height="1.7"/><rect x="208.4" y="240.4" width="1.8" height="1.8"/><rect x="186.1" y="319.9" width="2.1" height="2.1"/><rect x="154.9" y="266.4" width="2.5" height="2.5"/><rect x="157.4" y="266.4" width="2.5" height="2.5"/><rect x="205.9" y="340.1" width="1.3" height="1.3"/><rect x="163.9" y="261.7" width="2.5" height="2.5"/><rect x="177.8" y="307.4" width="2.2" height="2.2"/><rect x="155.3" y="331.5" width="2.0" height="2.0"/><rect x="185.8" y="338.5" width="1.9" height="1.9"/><rect x="150.6" y="237.5" width="1.9" height="1.9"/><rect x="206.6" y="350.4" width="1.3" height="1.3"/><rect x="205.0" y="274.4" width="1.7" height="1.7"/><rect x="152.5" y="398.3" width="1.1" height="1.1"/><rect x="163.9" y="388.6" width="1.6" height="1.6"/><rect x="165.5" y="387.1" width="1.6" height="1.6"/><rect x="207.4" y="288.8" width="1.6" height="1.6"/><rect x="157.8" y="292.8" width="2.3" height="2.3"/><rect x="157.7" y="359.2" width="1.8" height="1.8"/><rect x="159.5" y="359.2" width="1.8" height="1.8"/><rect x="205.2" y="391.9" width="1.1" height="1.1"/><rect x="166.4" y="282.9" width="2.3" height="2.3"/><rect x="195.0" y="275.1" width="2.4" height="2.4"/><rect x="202.2" y="372.3" width="1.7" height="1.7"/><rect x="202.2" y="374.0" width="1.7" height="1.7"/><rect x="206.6" y="352.6" width="1.3" height="1.3"/><rect x="207.8" y="353.9" width="1.3" height="1.3"/><rect x="181.8" y="305.8" width="2.2" height="2.2"/><rect x="206.4" y="279.9" width="1.7" height="1.7"/><rect x="160.4" y="319.6" width="2.1" height="2.1"/><rect x="181.8" y="308.6" width="2.2" height="2.2"/><rect x="206.9" y="255.2" width="1.8" height="1.8"/><rect x="200.7" y="265.5" width="2.5" height="2.5"/><rect x="162.7" y="286.8" width="2.3" height="2.3"/><rect x="171.2" y="308.2" width="2.2" height="2.2"/><rect x="168.5" y="337.4" width="1.9" height="1.9"/><rect x="170.4" y="337.4" width="1.9" height="1.9"/><rect x="178.4" y="370.6" width="1.7" height="1.7"/><rect x="157.1" y="249.3" width="2.6" height="2.6"/><rect x="159.7" y="246.7" width="2.6" height="2.6"/><rect x="151.1" y="240.4" width="1.8" height="1.8"/><rect x="158.1" y="337.3" width="1.9" height="1.9"/><rect x="152.0" y="348.2" width="1.3" height="1.3"/><rect x="152.0" y="349.5" width="1.3" height="1.3"/><rect x="153.0" y="287.7" width="1.6" height="1.6"/><rect x="198.0" y="268.8" width="2.4" height="2.4"/><rect x="207.5" y="317.6" width="1.5" height="1.5"/><rect x="187.2" y="255.5" width="2.5" height="2.5"/><rect x="163.7" y="341.8" width="1.9" height="1.9"/><rect x="173.2" y="352.4" width="1.8" height="1.8"/><rect x="162.5" y="356.7" width="1.8" height="1.8"/><rect x="164.3" y="358.5" width="1.8" height="1.8"/><rect x="205.7" y="362.4" width="1.2" height="1.2"/><rect x="207.0" y="363.6" width="1.2" height="1.2"/><rect x="202.0" y="390.8" width="1.6" height="1.6"/><rect x="149.6" y="396.4" width="1.1" height="1.1"/><rect x="208.1" y="350.6" width="1.3" height="1.3"/><rect x="209.4" y="350.6" width="1.3" height="1.3"/><rect x="192.8" y="254.2" width="2.5" height="2.5"/><rect x="175.8" y="378.2" width="1.7" height="1.7"/><rect x="204.5" y="269.0" width="1.7" height="1.7"/><rect x="168.3" y="286.3" width="2.3" height="2.3"/><rect x="170.6" y="286.3" width="2.3" height="2.3"/><rect x="207.6" y="395.9" width="1.1" height="1.1"/><rect x="173.7" y="263.9" width="2.5" height="2.5"/><rect x="170.0" y="358.5" width="1.8" height="1.8"/><rect x="168.7" y="266.1" width="2.5" height="2.5"/><rect x="196.1" y="353.0" width="1.8" height="1.8"/><rect x="198.0" y="353.0" width="1.8" height="1.8"/><rect x="195.2" y="302.0" width="2.2" height="2.2"/><rect x="197.4" y="299.8" width="2.2" height="2.2"/><rect x="151.5" y="246.6" width="1.8" height="1.8"/><rect x="153.3" y="248.4" width="1.8" height="1.8"/><rect x="185.0" y="374.6" width="1.7" height="1.7"/><rect x="184.4" y="301.1" width="2.2" height="2.2"/><rect x="150.7" y="359.6" width="1.3" height="1.3"/><rect x="156.9" y="250.5" width="2.6" height="2.6"/><rect x="206.4" y="257.6" width="1.8" height="1.8"/><rect x="206.4" y="259.4" width="1.8" height="1.8"/><rect x="185.7" y="261.7" width="2.5" height="2.5"/><rect x="207.0" y="365.4" width="1.2" height="1.2"/><rect x="152.2" y="256.2" width="1.8" height="1.8"/><rect x="206.6" y="276.9" width="1.7" height="1.7"/><rect x="208.5" y="338.1" width="1.4" height="1.4"/><rect x="208.2" y="387.7" width="1.1" height="1.1"/><rect x="149.7" y="261.4" width="1.7" height="1.7"/><rect x="152.7" y="298.9" width="1.6" height="1.6"/><rect x="158.9" y="259.1" width="2.5" height="2.5"/><rect x="173.9" y="372.9" width="1.7" height="1.7"/><rect x="206.9" y="239.5" width="1.9" height="1.9"/><rect x="159.6" y="368.8" width="1.7" height="1.7"/><rect x="207.3" y="289.5" width="1.6" height="1.6"/><rect x="171.0" y="274.5" width="2.4" height="2.4"/><rect x="173.7" y="337.1" width="1.9" height="1.9"/><rect x="175.6" y="335.1" width="1.9" height="1.9"/><rect x="197.0" y="391.9" width="1.6" height="1.6"/><rect x="152.9" y="301.1" width="1.5" height="1.5"/><rect x="205.5" y="309.4" width="1.5" height="1.5"/><rect x="155.8" y="329.6" width="2.0" height="2.0"/><rect x="185.8" y="336.2" width="2.0" height="2.0"/><rect x="152.9" y="376.0" width="1.2" height="1.2"/><rect x="152.9" y="377.2" width="1.2" height="1.2"/><rect x="149.6" y="286.9" width="1.6" height="1.6"/><rect x="149.6" y="288.6" width="1.6" height="1.6"/><rect x="186.1" y="328.0" width="2.0" height="2.0"/><rect x="207.3" y="273.8" width="1.7" height="1.7"/><rect x="206.6" y="253.2" width="1.8" height="1.8"/><rect x="173.4" y="377.6" width="1.7" height="1.7"/><rect x="206.7" y="295.5" width="1.6" height="1.6"/><rect x="207.7" y="335.5" width="1.4" height="1.4"/><rect x="187.6" y="359.5" width="1.8" height="1.8"/><rect x="189.4" y="359.5" width="1.8" height="1.8"/><rect x="192.0" y="382.1" width="1.6" height="1.6"/><rect x="192.0" y="383.7" width="1.6" height="1.6"/><rect x="189.4" y="372.1" width="1.7" height="1.7"/><rect x="166.4" y="250.2" width="2.6" height="2.6"/><rect x="166.4" y="252.8" width="2.6" height="2.6"/><rect x="177.9" y="264.8" width="2.5" height="2.5"/><rect x="151.6" y="275.6" width="1.7" height="1.7"/><rect x="160.4" y="344.3" width="1.9" height="1.9"/><rect x="162.3" y="344.3" width="1.9" height="1.9"/><rect x="208.4" y="362.9" width="1.2" height="1.2"/><rect x="199.0" y="264.5" width="2.5" height="2.5"/><rect x="183.3" y="266.6" width="2.5" height="2.5"/><rect x="152.0" y="297.6" width="1.6" height="1.6"/><rect x="183.8" y="336.0" width="2.0" height="2.0"/><rect x="163.4" y="355.4" width="1.8" height="1.8"/><rect x="153.7" y="293.1" width="1.6" height="1.6"/><rect x="174.1" y="313.0" width="2.1" height="2.1"/><rect x="177.6" y="257.0" width="2.5" height="2.5"/><rect x="154.5" y="350.1" width="1.9" height="1.9"/><rect x="152.8" y="290.2" width="1.6" height="1.6"/><rect x="154.4" y="291.8" width="1.6" height="1.6"/><rect x="184.7" y="327.1" width="2.0" height="2.0"/><rect x="153.4" y="263.9" width="1.7" height="1.7"/><rect x="153.0" y="254.2" width="1.8" height="1.8"/><rect x="207.8" y="247.9" width="1.8" height="1.8"/><rect x="181.2" y="353.6" width="1.8" height="1.8"/><rect x="192.6" y="358.0" width="1.8" height="1.8"/><rect x="203.8" y="389.6" width="1.6" height="1.6"/><rect x="175.4" y="266.8" width="2.5" height="2.5"/><rect x="177.9" y="269.2" width="2.5" height="2.5"/><rect x="201.1" y="271.7" width="2.4" height="2.4"/><rect x="198.2" y="251.8" width="2.6" height="2.6"/><rect x="200.3" y="358.2" width="1.8" height="1.8"/><rect x="202.6" y="286.2" width="2.3" height="2.3"/><rect x="204.9" y="283.9" width="2.3" height="2.3"/><rect x="151.3" y="303.2" width="1.5" height="1.5"/><rect x="162.9" y="322.2" width="2.1" height="2.1"/><rect x="152.9" y="321.2" width="1.4" height="1.4"/><rect x="152.9" y="280.1" width="1.6" height="1.6"/><rect x="154.7" y="347.9" width="1.9" height="1.9"/><rect x="180.9" y="256.2" width="2.5" height="2.5"/><rect x="152.9" y="243.2" width="1.8" height="1.8"/><rect x="154.8" y="243.2" width="1.8" height="1.8"/><rect x="167.1" y="375.1" width="1.7" height="1.7"/><rect x="167.5" y="368.0" width="1.7" height="1.7"/><rect x="194.1" y="361.1" width="1.8" height="1.8"/><rect x="152.7" y="380.8" width="1.1" height="1.1"/><rect x="207.5" y="312.1" width="1.5" height="1.5"/><rect x="183.2" y="351.5" width="1.8" height="1.8"/><rect x="195.6" y="306.8" width="2.2" height="2.2"/><rect x="179.8" y="326.6" width="2.0" height="2.0"/><rect x="151.3" y="269.7" width="1.7" height="1.7"/><rect x="182.4" y="306.7" width="2.2" height="2.2"/><rect x="173.1" y="282.0" width="2.3" height="2.3"/><rect x="175.4" y="282.0" width="2.3" height="2.3"/><rect x="171.8" y="293.9" width="2.3" height="2.3"/><rect x="172.2" y="391.8" width="1.6" height="1.6"/><rect x="172.2" y="393.4" width="1.6" height="1.6"/><rect x="151.8" y="401.3" width="1.0" height="1.0"/><rect x="182.0" y="384.5" width="1.6" height="1.6"/><rect x="183.4" y="297.0" width="2.2" height="2.2"/><rect x="179.4" y="336.7" width="2.0" height="2.0"/><rect x="191.5" y="353.4" width="1.8" height="1.8"/><rect x="161.6" y="250.6" width="2.6" height="2.6"/><rect x="164.2" y="250.6" width="2.6" height="2.6"/><rect x="161.9" y="251.1" width="2.6" height="2.6"/><rect x="175.4" y="368.6" width="1.7" height="1.7"/><rect x="177.0" y="269.2" width="2.4" height="2.4"/><rect x="186.4" y="347.2" width="1.9" height="1.9"/><rect x="151.3" y="265.3" width="1.7" height="1.7"/><rect x="187.3" y="348.8" width="1.9" height="1.9"/><rect x="187.3" y="350.6" width="1.9" height="1.9"/><rect x="176.4" y="344.3" width="1.9" height="1.9"/><rect x="207.5" y="390.4" width="1.1" height="1.1"/><rect x="152.1" y="380.4" width="1.1" height="1.1"/><rect x="152.1" y="381.6" width="1.1" height="1.1"/><rect x="151.6" y="390.3" width="1.1" height="1.1"/><rect x="152.7" y="390.3" width="1.1" height="1.1"/><rect x="180.1" y="365.8" width="1.7" height="1.7"/><rect x="179.7" y="316.5" width="2.1" height="2.1"/><rect x="204.1" y="312.7" width="1.5" height="1.5"/><rect x="157.8" y="288.5" width="2.3" height="2.3"/><rect x="160.1" y="290.8" width="2.3" height="2.3"/><rect x="206.4" y="335.7" width="1.4" height="1.4"/><rect x="188.8" y="395.0" width="1.5" height="1.5"/><rect x="203.7" y="260.1" width="2.5" height="2.5"/><rect x="154.8" y="251.1" width="2.6" height="2.6"/><rect x="154.8" y="253.6" width="2.6" height="2.6"/><rect x="163.6" y="302.7" width="2.2" height="2.2"/><rect x="165.8" y="304.9" width="2.2" height="2.2"/><rect x="195.5" y="341.5" width="1.9" height="1.9"/><rect x="194.7" y="361.1" width="1.8" height="1.8"/><rect x="165.2" y="267.0" width="2.4" height="2.4"/><rect x="195.8" y="305.0" width="2.2" height="2.2"/><rect x="185.9" y="275.9" width="2.4" height="2.4"/><rect x="172.6" y="249.4" width="2.6" height="2.6"/><rect x="207.2" y="366.3" width="1.2" height="1.2"/><rect x="205.8" y="257.8" width="1.8" height="1.8"/><rect x="206.2" y="381.5" width="1.1" height="1.1"/><rect x="150.7" y="367.9" width="1.2" height="1.2"/><rect x="151.9" y="369.1" width="1.2" height="1.2"/><rect x="180.7" y="255.9" width="2.5" height="2.5"/><rect x="152.1" y="342.6" width="1.3" height="1.3"/><rect x="178.1" y="303.4" width="2.2" height="2.2"/><rect x="180.3" y="301.2" width="2.2" height="2.2"/><rect x="152.5" y="263.6" width="1.7" height="1.7"/><rect x="172.0" y="341.4" width="1.9" height="1.9"/><rect x="187.2" y="253.4" width="2.5" height="2.5"/><rect x="169.5" y="344.9" width="1.9" height="1.9"/><rect x="171.4" y="343.0" width="1.9" height="1.9"/><rect x="152.9" y="305.6" width="1.5" height="1.5"/><rect x="171.5" y="279.0" width="2.4" height="2.4"/><rect x="165.1" y="269.8" width="2.4" height="2.4"/><rect x="173.6" y="271.2" width="2.4" height="2.4"/><rect x="162.4" y="385.6" width="1.6" height="1.6"/><rect x="167.7" y="277.7" width="2.4" height="2.4"/><rect x="206.9" y="366.3" width="1.2" height="1.2"/><rect x="207.1" y="243.3" width="1.8" height="1.8"/><rect x="190.0" y="331.5" width="2.0" height="2.0"/><rect x="176.6" y="258.3" width="2.5" height="2.5"/><rect x="179.2" y="258.3" width="2.5" height="2.5"/><rect x="174.6" y="341.0" width="1.9" height="1.9"/><rect x="195.1" y="284.3" width="2.3" height="2.3"/><rect x="151.9" y="383.3" width="1.1" height="1.1"/><rect x="197.2" y="308.1" width="2.2" height="2.2"/><rect x="199.4" y="305.9" width="2.2" height="2.2"/><rect x="176.0" y="323.2" width="2.0" height="2.0"/><rect x="187.9" y="326.9" width="2.0" height="2.0"/><rect x="205.7" y="318.0" width="1.5" height="1.5"/><rect x="149.5" y="294.8" width="1.6" height="1.6"/><rect x="149.5" y="296.4" width="1.6" height="1.6"/><rect x="152.1" y="384.8" width="1.1" height="1.1"/><rect x="151.7" y="355.6" width="1.3" height="1.3"/><rect x="206.6" y="354.7" width="1.3" height="1.3"/><rect x="207.9" y="356.0" width="1.3" height="1.3"/><rect x="153.0" y="394.5" width="1.1" height="1.1"/><rect x="184.6" y="287.9" width="2.3" height="2.3"/><rect x="186.9" y="285.6" width="2.3" height="2.3"/><rect x="204.2" y="329.9" width="1.4" height="1.4"/></g><path d="M372.79999999999995 86.5 L372.79999999999995 269 A25.9 15.5 0 0 0 424.6 269 L428 86.5 Z" fill="url(#c2)"/><ellipse cx="401.29999999999995" cy="86.5" rx="26.5" ry="15.5" fill="#2c5282"/><g fill="#060606"><rect x="374.9" y="212.9" width="1.3" height="1.3"/><rect x="397.8" y="171.0" width="2.1" height="2.1"/><rect x="427.4" y="134.6" width="1.7" height="1.7"/><rect x="390.3" y="246.6" width="1.6" height="1.6"/><rect x="405.6" y="150.9" width="2.3" height="2.3"/><rect x="407.9" y="148.6" width="2.3" height="2.3"/><rect x="425.4" y="132.9" width="1.7" height="1.7"/><rect x="375.2" y="133.9" width="1.7" height="1.7"/><rect x="376.9" y="132.2" width="1.7" height="1.7"/><rect x="427.1" y="145.1" width="1.6" height="1.6"/><rect x="426.0" y="137.9" width="1.7" height="1.7"/><rect x="426.0" y="193.7" width="1.4" height="1.4"/><rect x="427.4" y="233.6" width="1.2" height="1.2"/><rect x="375.5" y="177.0" width="1.5" height="1.5"/><rect x="381.4" y="148.2" width="2.3" height="2.3"/><rect x="399.9" y="126.0" width="2.4" height="2.4"/><rect x="402.4" y="128.5" width="2.4" height="2.4"/><rect x="382.3" y="203.5" width="1.9" height="1.9"/><rect x="379.1" y="132.4" width="2.4" height="2.4"/><rect x="425.9" y="193.7" width="1.4" height="1.4"/><rect x="425.9" y="195.1" width="1.4" height="1.4"/><rect x="372.8" y="127.4" width="1.7" height="1.7"/><rect x="421.7" y="167.2" width="2.2" height="2.2"/><rect x="378.9" y="266.9" width="1.5" height="1.5"/><rect x="409.2" y="205.1" width="1.9" height="1.9"/><rect x="378.4" y="250.7" width="1.6" height="1.6"/><rect x="375.2" y="186.6" width="1.4" height="1.4"/><rect x="373.0" y="93.7" width="1.9" height="1.9"/><rect x="385.8" y="194.4" width="2.0" height="2.0"/><rect x="425.8" y="128.0" width="1.7" height="1.7"/><rect x="398.6" y="265.1" width="1.5" height="1.5"/><rect x="400.1" y="265.1" width="1.5" height="1.5"/><rect x="378.2" y="110.0" width="2.5" height="2.5"/><rect x="427.7" y="259.4" width="1.1" height="1.1"/><rect x="428.8" y="258.3" width="1.1" height="1.1"/><rect x="397.8" y="249.0" width="1.6" height="1.6"/><rect x="381.6" y="171.1" width="2.1" height="2.1"/><rect x="390.1" y="114.1" width="2.5" height="2.5"/><rect x="377.0" y="129.8" width="2.4" height="2.4"/><rect x="424.9" y="142.7" width="1.6" height="1.6"/><rect x="377.1" y="102.8" width="2.6" height="2.6"/><rect x="377.1" y="105.4" width="2.6" height="2.6"/><rect x="380.4" y="188.1" width="2.0" height="2.0"/><rect x="382.4" y="190.2" width="2.0" height="2.0"/><rect x="373.0" y="161.9" width="1.5" height="1.5"/><rect x="425.0" y="158.6" width="1.6" height="1.6"/><rect x="376.7" y="241.2" width="1.2" height="1.2"/><rect x="390.5" y="115.1" width="2.5" height="2.5"/><rect x="373.8" y="106.8" width="1.8" height="1.8"/><rect x="412.4" y="246.1" width="1.7" height="1.7"/><rect x="412.4" y="247.7" width="1.7" height="1.7"/><rect x="411.2" y="118.7" width="2.5" height="2.5"/><rect x="413.6" y="121.2" width="2.5" height="2.5"/><rect x="427.3" y="118.0" width="1.7" height="1.7"/><rect x="429.0" y="119.8" width="1.7" height="1.7"/><rect x="419.3" y="142.8" width="2.3" height="2.3"/><rect x="381.1" y="157.4" width="2.2" height="2.2"/><rect x="393.4" y="115.1" width="2.5" height="2.5"/><rect x="392.8" y="191.3" width="2.0" height="2.0"/><rect x="394.8" y="191.3" width="2.0" height="2.0"/><rect x="416.8" y="103.9" width="2.6" height="2.6"/><rect x="419.4" y="106.5" width="2.6" height="2.6"/><rect x="404.3" y="235.1" width="1.7" height="1.7"/><rect x="406.0" y="236.8" width="1.7" height="1.7"/><rect x="400.0" y="255.8" width="1.6" height="1.6"/><rect x="426.3" y="114.5" width="1.8" height="1.8"/><rect x="428.1" y="114.5" width="1.8" height="1.8"/><rect x="379.5" y="180.4" width="2.1" height="2.1"/><rect x="379.5" y="182.5" width="2.1" height="2.1"/><rect x="374.8" y="231.2" width="1.2" height="1.2"/><rect x="427.0" y="253.2" width="1.1" height="1.1"/><rect x="381.7" y="270.4" width="1.5" height="1.5"/><rect x="383.2" y="270.4" width="1.5" height="1.5"/><rect x="414.8" y="154.7" width="2.3" height="2.3"/><rect x="418.2" y="248.2" width="1.6" height="1.6"/><rect x="377.0" y="243.0" width="1.7" height="1.7"/><rect x="385.5" y="126.6" width="2.4" height="2.4"/><rect x="416.5" y="270.2" width="1.5" height="1.5"/><rect x="418.0" y="270.2" width="1.5" height="1.5"/><rect x="374.0" y="213.2" width="1.3" height="1.3"/><rect x="389.2" y="162.3" width="2.2" height="2.2"/><rect x="424.1" y="103.9" width="1.8" height="1.8"/><rect x="422.9" y="98.0" width="2.6" height="2.6"/><rect x="404.3" y="258.6" width="1.6" height="1.6"/><rect x="382.3" y="226.6" width="1.8" height="1.8"/><rect x="426.0" y="207.2" width="1.3" height="1.3"/><rect x="378.5" y="169.4" width="2.2" height="2.2"/><rect x="390.7" y="277.6" width="1.4" height="1.4"/><rect x="379.0" y="140.7" width="2.3" height="2.3"/><rect x="379.0" y="143.0" width="2.3" height="2.3"/><rect x="382.5" y="135.2" width="2.4" height="2.4"/><rect x="427.3" y="163.5" width="1.5" height="1.5"/><rect x="409.6" y="180.0" width="2.1" height="2.1"/><rect x="411.7" y="177.9" width="2.1" height="2.1"/><rect x="386.2" y="143.2" width="2.3" height="2.3"/><rect x="387.4" y="244.4" width="1.7" height="1.7"/><rect x="407.2" y="130.2" width="2.4" height="2.4"/><rect x="374.5" y="255.4" width="1.1" height="1.1"/><rect x="374.5" y="256.5" width="1.1" height="1.1"/><rect x="419.8" y="159.1" width="2.2" height="2.2"/><rect x="389.2" y="251.1" width="1.6" height="1.6"/><rect x="381.0" y="153.7" width="2.3" height="2.3"/><rect x="383.8" y="151.7" width="2.3" height="2.3"/><rect x="386.0" y="149.4" width="2.3" height="2.3"/><rect x="378.8" y="191.4" width="2.0" height="2.0"/><rect x="380.8" y="193.4" width="2.0" height="2.0"/><rect x="386.9" y="277.4" width="1.4" height="1.4"/><rect x="375.5" y="259.9" width="1.1" height="1.1"/><rect x="379.8" y="136.1" width="2.4" height="2.4"/><rect x="386.4" y="179.3" width="2.1" height="2.1"/><rect x="384.2" y="150.5" width="2.3" height="2.3"/><rect x="382.0" y="276.4" width="1.5" height="1.5"/><rect x="379.0" y="216.1" width="1.8" height="1.8"/><rect x="401.0" y="279.6" width="1.4" height="1.4"/><rect x="425.9" y="215.7" width="1.3" height="1.3"/><rect x="427.2" y="214.4" width="1.3" height="1.3"/><rect x="388.8" y="203.1" width="1.9" height="1.9"/><rect x="374.9" y="158.0" width="1.6" height="1.6"/><rect x="376.5" y="158.0" width="1.6" height="1.6"/><rect x="375.1" y="216.1" width="1.3" height="1.3"/><rect x="375.9" y="265.7" width="1.1" height="1.1"/><rect x="384.1" y="117.0" width="2.5" height="2.5"/><rect x="376.3" y="191.2" width="1.4" height="1.4"/><rect x="377.4" y="199.3" width="2.0" height="2.0"/><rect x="425.1" y="107.8" width="1.8" height="1.8"/><rect x="377.5" y="252.8" width="1.6" height="1.6"/><rect x="385.3" y="275.3" width="1.5" height="1.5"/><rect x="383.2" y="110.5" width="2.5" height="2.5"/><rect x="424.3" y="136.8" width="1.7" height="1.7"/><rect x="387.0" y="125.4" width="2.4" height="2.4"/><rect x="375.3" y="155.3" width="1.6" height="1.6"/><rect x="376.9" y="155.3" width="1.6" height="1.6"/><rect x="377.5" y="112.9" width="2.5" height="2.5"/><rect x="380.0" y="115.4" width="2.5" height="2.5"/><rect x="380.2" y="154.7" width="2.3" height="2.3"/><rect x="382.4" y="157.0" width="2.3" height="2.3"/><rect x="374.7" y="156.2" width="1.6" height="1.6"/><rect x="374.7" y="157.7" width="1.6" height="1.6"/><rect x="380.3" y="153.0" width="2.3" height="2.3"/><rect x="377.0" y="210.2" width="1.9" height="1.9"/><rect x="388.3" y="116.9" width="2.5" height="2.5"/><rect x="382.5" y="247.7" width="1.6" height="1.6"/><rect x="385.0" y="151.0" width="2.3" height="2.3"/><rect x="385.0" y="153.2" width="2.3" height="2.3"/><rect x="376.5" y="122.5" width="1.7" height="1.7"/><rect x="391.9" y="195.7" width="2.0" height="2.0"/><rect x="373.9" y="198.3" width="1.4" height="1.4"/><rect x="375.7" y="225.7" width="1.3" height="1.3"/><rect x="375.7" y="138.1" width="1.7" height="1.7"/><rect x="379.9" y="140.1" width="2.3" height="2.3"/><rect x="384.3" y="240.8" width="1.7" height="1.7"/><rect x="425.4" y="122.4" width="1.7" height="1.7"/><rect x="419.2" y="234.2" width="1.7" height="1.7"/><rect x="388.5" y="113.4" width="2.5" height="2.5"/><rect x="379.0" y="100.1" width="2.6" height="2.6"/><rect x="374.1" y="220.6" width="1.3" height="1.3"/><rect x="403.0" y="109.9" width="2.5" height="2.5"/><rect x="426.9" y="189.1" width="1.4" height="1.4"/><rect x="390.9" y="211.5" width="1.9" height="1.9"/><rect x="404.7" y="262.1" width="1.5" height="1.5"/><rect x="425.2" y="213.8" width="1.3" height="1.3"/><rect x="426.5" y="213.8" width="1.3" height="1.3"/><rect x="426.3" y="159.0" width="1.6" height="1.6"/><rect x="426.0" y="132.5" width="1.7" height="1.7"/><rect x="384.9" y="177.5" width="2.1" height="2.1"/><rect x="425.1" y="173.6" width="1.5" height="1.5"/><rect x="375.5" y="184.8" width="1.4" height="1.4"/><rect x="376.6" y="117.9" width="1.7" height="1.7"/><rect x="424.9" y="124.5" width="1.7" height="1.7"/><rect x="404.9" y="106.0" width="2.6" height="2.6"/><rect x="383.0" y="185.7" width="2.0" height="2.0"/><rect x="377.9" y="248.4" width="1.6" height="1.6"/><rect x="373.1" y="147.7" width="1.6" height="1.6"/><rect x="376.2" y="218.2" width="1.3" height="1.3"/><rect x="384.1" y="190.1" width="2.0" height="2.0"/><rect x="403.6" y="221.6" width="1.8" height="1.8"/><rect x="388.2" y="274.7" width="1.5" height="1.5"/><rect x="407.0" y="266.3" width="1.5" height="1.5"/><rect x="408.5" y="267.8" width="1.5" height="1.5"/><rect x="376.0" y="207.8" width="1.3" height="1.3"/><rect x="375.8" y="135.4" width="1.7" height="1.7"/><rect x="377.5" y="227.1" width="1.8" height="1.8"/><rect x="379.3" y="228.8" width="1.8" height="1.8"/><rect x="427.3" y="123.1" width="1.7" height="1.7"/><rect x="421.5" y="244.0" width="1.7" height="1.7"/><rect x="423.1" y="242.4" width="1.7" height="1.7"/><rect x="426.2" y="160.1" width="1.6" height="1.6"/><rect x="374.6" y="107.5" width="1.8" height="1.8"/><rect x="376.4" y="107.5" width="1.8" height="1.8"/><rect x="399.2" y="279.7" width="1.4" height="1.4"/><rect x="379.2" y="236.8" width="1.7" height="1.7"/><rect x="373.9" y="259.8" width="1.1" height="1.1"/><rect x="373.9" y="260.9" width="1.1" height="1.1"/><rect x="426.4" y="151.3" width="1.6" height="1.6"/><rect x="383.7" y="179.2" width="2.1" height="2.1"/><rect x="406.6" y="278.7" width="1.4" height="1.4"/><rect x="408.0" y="278.7" width="1.4" height="1.4"/><rect x="385.9" y="222.8" width="1.8" height="1.8"/><rect x="385.7" y="273.8" width="1.5" height="1.5"/><rect x="418.5" y="182.0" width="2.1" height="2.1"/><rect x="426.3" y="216.0" width="1.3" height="1.3"/><rect x="427.6" y="217.3" width="1.3" height="1.3"/><rect x="381.3" y="181.9" width="2.1" height="2.1"/><rect x="384.0" y="247.9" width="1.6" height="1.6"/><rect x="383.8" y="122.5" width="2.5" height="2.5"/><rect x="416.0" y="251.1" width="1.6" height="1.6"/><rect x="401.1" y="202.2" width="1.9" height="1.9"/><rect x="384.2" y="184.9" width="2.1" height="2.1"/><rect x="377.2" y="106.6" width="2.6" height="2.6"/><rect x="374.7" y="167.5" width="1.5" height="1.5"/><rect x="374.7" y="169.0" width="1.5" height="1.5"/><rect x="419.7" y="188.8" width="2.0" height="2.0"/><rect x="374.8" y="240.6" width="1.2" height="1.2"/><rect x="423.7" y="150.2" width="1.6" height="1.6"/><rect x="380.5" y="243.3" width="1.7" height="1.7"/><rect x="375.3" y="146.6" width="1.6" height="1.6"/><rect x="376.9" y="144.9" width="1.6" height="1.6"/><rect x="375.9" y="102.7" width="1.8" height="1.8"/><rect x="386.5" y="186.9" width="2.0" height="2.0"/><rect x="427.6" y="194.1" width="1.4" height="1.4"/><rect x="405.5" y="200.9" width="1.9" height="1.9"/><rect x="405.5" y="202.8" width="1.9" height="1.9"/><rect x="378.3" y="216.4" width="1.8" height="1.8"/><rect x="380.1" y="216.4" width="1.8" height="1.8"/><rect x="379.7" y="147.8" width="2.3" height="2.3"/><rect x="412.2" y="119.7" width="2.5" height="2.5"/><rect x="374.3" y="153.1" width="1.6" height="1.6"/><rect x="374.0" y="122.4" width="1.7" height="1.7"/><rect x="425.7" y="130.9" width="1.7" height="1.7"/><rect x="407.3" y="234.0" width="1.7" height="1.7"/><rect x="373.9" y="238.2" width="1.2" height="1.2"/><rect x="385.5" y="226.4" width="1.8" height="1.8"/><rect x="409.3" y="142.7" width="2.3" height="2.3"/><rect x="411.6" y="140.4" width="2.3" height="2.3"/><rect x="416.5" y="176.5" width="2.1" height="2.1"/><rect x="416.5" y="178.6" width="2.1" height="2.1"/><rect x="425.8" y="106.4" width="1.8" height="1.8"/><rect x="381.7" y="268.5" width="1.5" height="1.5"/><rect x="390.9" y="223.6" width="1.8" height="1.8"/><rect x="375.1" y="193.0" width="1.4" height="1.4"/><rect x="396.6" y="147.1" width="2.3" height="2.3"/><rect x="398.9" y="147.1" width="2.3" height="2.3"/><rect x="377.3" y="248.2" width="1.6" height="1.6"/><rect x="378.9" y="248.2" width="1.6" height="1.6"/><rect x="386.6" y="230.6" width="1.8" height="1.8"/><rect x="427.4" y="155.4" width="1.6" height="1.6"/><rect x="374.1" y="125.2" width="1.7" height="1.7"/><rect x="426.3" y="222.0" width="1.3" height="1.3"/><rect x="427.5" y="223.3" width="1.3" height="1.3"/><rect x="427.4" y="267.0" width="1.1" height="1.1"/><rect x="391.8" y="156.6" width="2.2" height="2.2"/><rect x="427.1" y="238.9" width="1.2" height="1.2"/><rect x="428.3" y="237.7" width="1.2" height="1.2"/><rect x="374.4" y="128.0" width="1.7" height="1.7"/><rect x="376.1" y="129.7" width="1.7" height="1.7"/><rect x="375.4" y="141.7" width="1.6" height="1.6"/><rect x="380.3" y="147.2" width="2.3" height="2.3"/><rect x="391.5" y="208.7" width="1.9" height="1.9"/><rect x="374.7" y="242.7" width="1.2" height="1.2"/><rect x="383.6" y="188.0" width="2.0" height="2.0"/><rect x="391.9" y="234.0" width="1.7" height="1.7"/><rect x="380.6" y="270.2" width="1.5" height="1.5"/><rect x="426.9" y="187.2" width="1.4" height="1.4"/><rect x="426.9" y="188.6" width="1.4" height="1.4"/><rect x="386.9" y="181.6" width="2.1" height="2.1"/><rect x="421.3" y="120.0" width="2.5" height="2.5"/><rect x="379.8" y="140.6" width="2.3" height="2.3"/><rect x="409.4" y="241.2" width="1.7" height="1.7"/><rect x="390.6" y="189.0" width="2.0" height="2.0"/><rect x="390.6" y="191.0" width="2.0" height="2.0"/><rect x="381.8" y="146.5" width="2.3" height="2.3"/><rect x="377.0" y="120.6" width="2.5" height="2.5"/><rect x="379.5" y="123.1" width="2.5" height="2.5"/><rect x="390.1" y="142.1" width="2.3" height="2.3"/><rect x="373.3" y="119.8" width="1.7" height="1.7"/><rect x="383.7" y="235.2" width="1.7" height="1.7"/><rect x="385.4" y="237.0" width="1.7" height="1.7"/><rect x="382.1" y="214.7" width="1.9" height="1.9"/><rect x="382.1" y="216.5" width="1.9" height="1.9"/><rect x="424.8" y="264.5" width="1.1" height="1.1"/><rect x="425.4" y="221.4" width="1.3" height="1.3"/><rect x="375.0" y="117.9" width="1.7" height="1.7"/><rect x="412.2" y="191.2" width="2.0" height="2.0"/><rect x="427.7" y="95.0" width="1.9" height="1.9"/><rect x="381.9" y="113.9" width="2.5" height="2.5"/><rect x="424.2" y="181.9" width="1.5" height="1.5"/><rect x="385.9" y="251.5" width="1.6" height="1.6"/><rect x="374.9" y="129.9" width="1.7" height="1.7"/><rect x="425.5" y="185.8" width="1.4" height="1.4"/><rect x="426.9" y="187.2" width="1.4" height="1.4"/><rect x="381.7" y="155.4" width="2.2" height="2.2"/><rect x="383.9" y="153.1" width="2.2" height="2.2"/><rect x="416.2" y="231.1" width="1.8" height="1.8"/><rect x="417.9" y="231.1" width="1.8" height="1.8"/><rect x="391.8" y="124.7" width="2.4" height="2.4"/><rect x="375.9" y="98.4" width="1.8" height="1.8"/><rect x="385.7" y="216.6" width="1.8" height="1.8"/><rect x="382.6" y="166.7" width="2.2" height="2.2"/><rect x="426.2" y="177.8" width="1.5" height="1.5"/><rect x="426.5" y="146.7" width="1.6" height="1.6"/><rect x="387.9" y="267.3" width="1.5" height="1.5"/><rect x="389.4" y="268.8" width="1.5" height="1.5"/><rect x="378.1" y="180.3" width="2.1" height="2.1"/><rect x="388.7" y="180.7" width="2.1" height="2.1"/><rect x="383.5" y="109.3" width="2.6" height="2.6"/><rect x="386.0" y="109.3" width="2.6" height="2.6"/><rect x="389.6" y="140.3" width="2.3" height="2.3"/><rect x="374.9" y="109.5" width="1.8" height="1.8"/><rect x="425.5" y="166.1" width="1.5" height="1.5"/><rect x="388.4" y="165.4" width="2.2" height="2.2"/><rect x="388.4" y="167.6" width="2.2" height="2.2"/><rect x="380.3" y="124.4" width="2.5" height="2.5"/><rect x="424.7" y="187.4" width="1.4" height="1.4"/><rect x="427.3" y="265.7" width="1.1" height="1.1"/><rect x="427.7" y="252.7" width="1.1" height="1.1"/><rect x="393.8" y="266.5" width="1.5" height="1.5"/><rect x="385.0" y="277.6" width="1.4" height="1.4"/><rect x="390.7" y="152.6" width="2.3" height="2.3"/><rect x="375.8" y="94.8" width="1.9" height="1.9"/><rect x="390.3" y="181.0" width="2.1" height="2.1"/><rect x="392.4" y="181.0" width="2.1" height="2.1"/><rect x="392.0" y="218.1" width="1.8" height="1.8"/><rect x="383.3" y="163.5" width="2.2" height="2.2"/><rect x="383.3" y="165.7" width="2.2" height="2.2"/><rect x="374.9" y="226.6" width="1.2" height="1.2"/><rect x="380.3" y="232.9" width="1.7" height="1.7"/><rect x="424.8" y="190.4" width="1.4" height="1.4"/><rect x="426.2" y="189.0" width="1.4" height="1.4"/><rect x="427.3" y="172.2" width="1.5" height="1.5"/><rect x="381.8" y="243.4" width="1.7" height="1.7"/><rect x="383.5" y="115.1" width="2.5" height="2.5"/><rect x="403.2" y="127.6" width="2.4" height="2.4"/><rect x="378.6" y="213.8" width="1.9" height="1.9"/><rect x="375.7" y="252.2" width="1.1" height="1.1"/><rect x="411.3" y="269.2" width="1.5" height="1.5"/><rect x="403.2" y="117.7" width="2.5" height="2.5"/><rect x="377.8" y="121.2" width="2.5" height="2.5"/><rect x="384.8" y="156.7" width="2.2" height="2.2"/><rect x="376.7" y="162.3" width="1.5" height="1.5"/><rect x="378.3" y="162.3" width="1.5" height="1.5"/><rect x="374.4" y="242.8" width="1.2" height="1.2"/><rect x="409.4" y="175.4" width="2.1" height="2.1"/><rect x="374.4" y="182.8" width="1.4" height="1.4"/><rect x="395.8" y="236.2" width="1.7" height="1.7"/><rect x="381.8" y="219.2" width="1.8" height="1.8"/><rect x="381.8" y="221.0" width="1.8" height="1.8"/><rect x="390.8" y="123.5" width="2.5" height="2.5"/><rect x="375.6" y="137.9" width="1.7" height="1.7"/><rect x="375.6" y="139.6" width="1.7" height="1.7"/><rect x="425.0" y="153.8" width="1.6" height="1.6"/><rect x="374.7" y="117.3" width="1.7" height="1.7"/><rect x="401.6" y="119.5" width="2.5" height="2.5"/><rect x="400.1" y="145.3" width="2.3" height="2.3"/><rect x="402.4" y="145.3" width="2.3" height="2.3"/><rect x="426.5" y="117.7" width="1.7" height="1.7"/><rect x="387.9" y="117.8" width="2.5" height="2.5"/><rect x="387.9" y="120.3" width="2.5" height="2.5"/><rect x="384.5" y="192.1" width="2.0" height="2.0"/><rect x="408.5" y="144.6" width="2.3" height="2.3"/><rect x="380.1" y="145.7" width="2.3" height="2.3"/><rect x="375.4" y="237.0" width="1.2" height="1.2"/><rect x="374.1" y="228.1" width="1.2" height="1.2"/><rect x="389.1" y="217.1" width="1.8" height="1.8"/><rect x="378.9" y="147.5" width="2.3" height="2.3"/><rect x="373.2" y="136.7" width="1.7" height="1.7"/><rect x="380.0" y="130.5" width="2.4" height="2.4"/><rect x="377.7" y="177.1" width="2.1" height="2.1"/><rect x="376.1" y="182.9" width="1.4" height="1.4"/><rect x="377.5" y="181.5" width="1.4" height="1.4"/><rect x="385.2" y="237.9" width="1.7" height="1.7"/><rect x="427.8" y="228.7" width="1.2" height="1.2"/><rect x="378.6" y="134.6" width="2.4" height="2.4"/><rect x="401.0" y="125.5" width="2.4" height="2.4"/><rect x="401.0" y="128.0" width="2.4" height="2.4"/><rect x="375.9" y="96.3" width="1.8" height="1.8"/><rect x="388.7" y="242.9" width="1.7" height="1.7"/><rect x="375.6" y="156.9" width="1.6" height="1.6"/><rect x="376.7" y="109.1" width="1.8" height="1.8"/><rect x="377.7" y="214.9" width="1.9" height="1.9"/><rect x="427.1" y="254.4" width="1.1" height="1.1"/><rect x="399.9" y="192.9" width="2.0" height="2.0"/><rect x="401.9" y="190.9" width="2.0" height="2.0"/><rect x="423.1" y="106.3" width="2.6" height="2.6"/><rect x="425.7" y="103.7" width="2.6" height="2.6"/><rect x="405.0" y="246.9" width="1.6" height="1.6"/><rect x="408.4" y="228.3" width="1.8" height="1.8"/><rect x="387.3" y="277.3" width="1.4" height="1.4"/><rect x="387.3" y="278.8" width="1.4" height="1.4"/><rect x="403.5" y="124.9" width="2.4" height="2.4"/><rect x="406.0" y="124.9" width="2.4" height="2.4"/><rect x="415.6" y="153.9" width="2.3" height="2.3"/><rect x="375.7" y="245.4" width="1.2" height="1.2"/><rect x="396.5" y="210.0" width="1.9" height="1.9"/><rect x="373.2" y="173.5" width="1.5" height="1.5"/><rect x="380.2" y="197.5" width="2.0" height="2.0"/><rect x="374.8" y="154.3" width="1.6" height="1.6"/><rect x="395.5" y="115.3" width="2.5" height="2.5"/><rect x="376.3" y="103.9" width="1.8" height="1.8"/><rect x="376.3" y="105.7" width="1.8" height="1.8"/><rect x="376.9" y="153.5" width="1.6" height="1.6"/><rect x="420.9" y="259.6" width="1.6" height="1.6"/><rect x="415.5" y="139.6" width="2.4" height="2.4"/><rect x="375.8" y="153.7" width="1.6" height="1.6"/><rect x="425.6" y="225.8" width="1.2" height="1.2"/><rect x="387.4" y="106.3" width="2.6" height="2.6"/><rect x="393.1" y="164.4" width="2.2" height="2.2"/><rect x="377.3" y="270.4" width="1.5" height="1.5"/><rect x="377.2" y="148.4" width="2.3" height="2.3"/><rect x="379.4" y="148.4" width="2.3" height="2.3"/><rect x="387.6" y="187.6" width="2.0" height="2.0"/><rect x="389.6" y="185.6" width="2.0" height="2.0"/><rect x="381.7" y="273.8" width="1.5" height="1.5"/><rect x="375.5" y="125.2" width="1.7" height="1.7"/><rect x="409.5" y="206.9" width="1.9" height="1.9"/><rect x="373.3" y="215.9" width="1.3" height="1.3"/><rect x="376.7" y="238.3" width="1.2" height="1.2"/><rect x="383.1" y="110.9" width="2.5" height="2.5"/><rect x="414.8" y="193.9" width="2.0" height="2.0"/><rect x="399.0" y="130.9" width="2.4" height="2.4"/><rect x="393.1" y="156.1" width="2.2" height="2.2"/><rect x="426.2" y="129.8" width="1.7" height="1.7"/><rect x="376.9" y="235.0" width="1.2" height="1.2"/><rect x="378.1" y="233.8" width="1.2" height="1.2"/><rect x="395.7" y="209.6" width="1.9" height="1.9"/><rect x="401.8" y="148.2" width="2.3" height="2.3"/><rect x="376.3" y="128.5" width="1.7" height="1.7"/><rect x="378.0" y="130.2" width="1.7" height="1.7"/><rect x="388.0" y="146.4" width="2.3" height="2.3"/><rect x="427.3" y="256.4" width="1.1" height="1.1"/><rect x="373.5" y="111.6" width="1.8" height="1.8"/><rect x="380.2" y="155.5" width="2.2" height="2.2"/><rect x="380.2" y="157.8" width="2.2" height="2.2"/><rect x="386.1" y="182.3" width="2.1" height="2.1"/><rect x="386.1" y="184.3" width="2.1" height="2.1"/><rect x="422.5" y="120.0" width="2.5" height="2.5"/><rect x="404.4" y="251.2" width="1.6" height="1.6"/><rect x="418.7" y="236.4" width="1.7" height="1.7"/><rect x="400.3" y="211.8" width="1.9" height="1.9"/><rect x="402.2" y="211.8" width="1.9" height="1.9"/><rect x="408.1" y="227.2" width="1.8" height="1.8"/><rect x="408.1" y="229.0" width="1.8" height="1.8"/><rect x="394.3" y="206.6" width="1.9" height="1.9"/><rect x="396.2" y="206.6" width="1.9" height="1.9"/><rect x="400.8" y="233.4" width="1.7" height="1.7"/><rect x="384.3" y="137.8" width="2.4" height="2.4"/><rect x="386.7" y="137.8" width="2.4" height="2.4"/><rect x="377.9" y="147.6" width="2.3" height="2.3"/><rect x="380.2" y="149.9" width="2.3" height="2.3"/><rect x="387.8" y="120.9" width="2.5" height="2.5"/><rect x="405.3" y="279.3" width="1.4" height="1.4"/><rect x="427.7" y="102.2" width="1.8" height="1.8"/><rect x="385.1" y="120.8" width="2.5" height="2.5"/><rect x="387.6" y="120.8" width="2.5" height="2.5"/><rect x="425.9" y="121.8" width="1.7" height="1.7"/><rect x="395.1" y="223.2" width="1.8" height="1.8"/><rect x="426.2" y="122.4" width="1.7" height="1.7"/><rect x="427.9" y="124.1" width="1.7" height="1.7"/><rect x="426.4" y="208.8" width="1.3" height="1.3"/><rect x="380.0" y="116.0" width="2.5" height="2.5"/><rect x="375.0" y="96.8" width="1.8" height="1.8"/><rect x="375.0" y="98.6" width="1.8" height="1.8"/><rect x="427.0" y="233.8" width="1.2" height="1.2"/><rect x="428.2" y="233.8" width="1.2" height="1.2"/><rect x="373.3" y="94.7" width="1.9" height="1.9"/></g><path d="M400.3 63.5 L361.0 87.0 M400.3 63.5 L438.5 85.5 M361.0 87.0 L398.7 108.0 M438.5 85.5 L398.7 108.0 M361.0 87.0 L361.0 269.5 M438.5 85.5 L438.5 268.0 M398.7 108.0 L398.7 291.5 M361.0 269.5 L398.7 291.5 M438.5 268.0 L398.7 291.5 " stroke="#e6e62a" stroke-width="1.4" fill="none"/><path d="M400.3 63.5 L400.3 70.5 M361.0 269.5 L372.0 263.0 M438.5 268.0 L423.5 260.0 " stroke="#e6e62a" stroke-width="1.4" fill="none"/><path d="M262 248.5 H282 M272 238.5 V258.5" stroke="#c8c8c8" stroke-width="1"/><path d="M322 458.5 H458 M322.5 455 V462 M457.5 455 V462" stroke="#c8c8c8" stroke-width="1.2"/><text x="389.5" y="480.5" text-anchor="middle" font-family="Liberation Sans" font-size="10.5" fill="#e8e8e8">0.2</text><path d="M501.5 459 L501.5 440" stroke="#18a8e8" stroke-width="2"/><path d="M501.5 459 L485.5 449.5" stroke="#20e020" stroke-width="2.2"/><path d="M501.5 459 L518.5 449" stroke="#f01818" stroke-width="2.2"/><text x="500" y="436.5" text-anchor="middle" font-family="Liberation Sans" font-size="10" fill="#18a8e8">Z</text><text x="477" y="449" text-anchor="middle" font-family="Liberation Sans" font-size="10" fill="#20c020">Y</text><text x="524.5" y="449" text-anchor="middle" font-family="Liberation Sans" font-size="10" fill="#d01010">X</text></svg>
<div class="a" style="left:859px;top:77px;width:65px;height:623px;background:#f0f0f0"></div>
<div class="a" style="left:859px;top:77px;width:1px;height:623px;background:#d8d8d8"></div>
<div class="a" style="left:859px;top:700px;width:65px;height:1px;background:#cacaca"></div>
<div class="a" style="left:863.0px;top:82px;width:1.2px;height:1.2px;background:#acacac"></div><div class="a" style="left:866.3px;top:82px;width:1.2px;height:1.2px;background:#acacac"></div><div class="a" style="left:869.6px;top:82px;width:1.2px;height:1.2px;background:#acacac"></div><div class="a" style="left:872.9px;top:82px;width:1.2px;height:1.2px;background:#acacac"></div><div class="a" style="left:876.2px;top:82px;width:1.2px;height:1.2px;background:#acacac"></div><div class="a" style="left:879.5px;top:82px;width:1.2px;height:1.2px;background:#acacac"></div><div class="a" style="left:882.8px;top:82px;width:1.2px;height:1.2px;background:#acacac"></div><div class="a" style="left:886.1px;top:82px;width:1.2px;height:1.2px;background:#acacac"></div><div class="a" style="left:889.4px;top:82px;width:1.2px;height:1.2px;background:#acacac"></div><div class="a" style="left:892.7px;top:82px;width:1.2px;height:1.2px;background:#acacac"></div><div class="a" style="left:896.0px;top:82px;width:1.2px;height:1.2px;background:#acacac"></div><div class="a" style="left:899.3px;top:82px;width:1.2px;height:1.2px;background:#acacac"></div><div class="a" style="left:902.6px;top:82px;width:1.2px;height:1.2px;background:#acacac"></div><div class="a" style="left:905.9px;top:82px;width:1.2px;height:1.2px;background:#acacac"></div><div class="a" style="left:909.2px;top:82px;width:1.2px;height:1.2px;background:#acacac"></div><div class="a" style="left:912.5px;top:82px;width:1.2px;height:1.2px;background:#acacac"></div><div class="a" style="left:915.8px;top:82px;width:1.2px;height:1.2px;background:#acacac"></div><div class="a" style="left:919.1px;top:82px;width:1.2px;height:1.2px;background:#acacac"></div>
<div class="a" style="left:863.0px;top:173.5px;width:1.2px;height:1.2px;background:#acacac"></div><div class="a" style="left:866.3px;top:173.5px;width:1.2px;height:1.2px;background:#acacac"></div><div class="a" style="left:869.6px;top:173.5px;width:1.2px;height:1.2px;background:#acacac"></div><div class="a" style="left:872.9px;top:173.5px;width:1.2px;height:1.2px;background:#acacac"></div><div class="a" style="left:876.2px;top:173.5px;width:1.2px;height:1.2px;background:#acacac"></div><div class="a" style="left:879.5px;top:173.5px;width:1.2px;height:1.2px;background:#acacac"></div><div class="a" style="left:882.8px;top:173.5px;width:1.2px;height:1.2px;background:#acacac"></div><div class="a" style="left:886.1px;top:173.5px;width:1.2px;height:1.2px;background:#acacac"></div><div class="a" style="left:889.4px;top:173.5px;width:1.2px;height:1.2px;background:#acacac"></div><div class="a" style="left:892.7px;top:173.5px;width:1.2px;height:1.2px;background:#acacac"></div><div class="a" style="left:896.0px;top:173.5px;width:1.2px;height:1.2px;background:#acacac"></div><div class="a" style="left:899.3px;top:173.5px;width:1.2px;height:1.2px;background:#acacac"></div><div class="a" style="left:902.6px;top:173.5px;width:1.2px;height:1.2px;background:#acacac"></div><div class="a" style="left:905.9px;top:173.5px;width:1.2px;height:1.2px;background:#acacac"></div><div class="a" style="left:909.2px;top:173.5px;width:1.2px;height:1.2px;background:#acacac"></div><div class="a" style="left:912.5px;top:173.5px;width:1.2px;height:1.2px;background:#acacac"></div><div class="a" style="left:915.8px;top:173.5px;width:1.2px;height:1.2px;background:#acacac"></div><div class="a" style="left:919.1px;top:173.5px;width:1.2px;height:1.2px;background:#acacac"></div>
<div class="a" style="left:860px;top:168px;width:63px;height:1px;background:#d0d0d0"></div>
<svg style="left:880.5px;top:88.5px" width="21" height="21" viewBox="0 0 21 21"><circle cx="10.5" cy="10.5" r="8.7" fill="none" stroke="#808080" stroke-width="3"/><path d="M4.5 14.5 L16.5 6.5" stroke="#808080" stroke-width="3.2"/><circle cx="10.5" cy="10.5" r="10" fill="none" stroke="#6a6a6a" stroke-width="0.6"/></svg>
<svg style="left:882px;top:118px" width="19" height="19" viewBox="0 0 19 19"><rect width="19" height="19" fill="#8a8a8a"/><path d="M5 12 Q3 6 9 4 Q14 3 16 7" fill="none" stroke="#b0b0b0" stroke-width="1.5"/><path d="M8 13 Q7 8 11 7 Q15 7 14 12" fill="none" stroke="#a8a8a8" stroke-width="1.3"/><circle cx="16" cy="2.5" r="1" fill="#ddd"/><text x="9.5" y="17.8" text-anchor="middle" font-family="Liberation Sans" font-weight="bold" font-size="7" fill="#fff" letter-spacing="-0.2">EDL</text></svg>
<svg style="left:882px;top:145px" width="19" height="19" viewBox="0 0 19 19"><rect width="19" height="19" fill="#8a8a8a"/><path d="M5 12 Q3 6 9 4 Q14 3 16 7" fill="none" stroke="#b0b0b0" stroke-width="1.5"/><path d="M8 13 Q7 8 11 7 Q15 7 14 12" fill="none" stroke="#a8a8a8" stroke-width="1.3"/><circle cx="16" cy="2.5" r="1" fill="#ddd"/><text x="9.5" y="17.8" text-anchor="middle" font-family="Liberation Sans" font-weight="bold" font-size="7" fill="#fff" letter-spacing="-0.2">SS40</text></svg>
<svg style="left:880.5px;top:182.5px" width="21" height="20" viewBox="0 0 21 20"><defs><linearGradient id="cg" x1="0" y1="0" x2="0" y2="1"><stop offset="0" stop-color="#707070"/><stop offset="0.5" stop-color="#d0d0d0"/><stop offset="1" stop-color="#808080"/></linearGradient></defs>
<path d="M1 2 L19 0 L19.5 4 L1.5 6 Z" fill="#606060"/><path d="M3 1.8 L5 5.6 M7 1.4 L9 5.2 M11 1 L13 4.8 M15 0.6 L17 4.4" stroke="#eee" stroke-width="1.2"/>
<rect x="1" y="6" width="19" height="13.5" fill="url(#cg)"/></svg>
<svg style="left:885.5px;top:207.5px" width="11" height="21" viewBox="0 0 11 21"><rect x="4.5" y="0" width="2" height="11" fill="#b8b8b8"/><path d="M2 11 H9 L10 20 H1 Z" fill="#cfcfcf" stroke="#aaa" stroke-width="0.6"/></svg>
<svg style="left:879.5px;top:235px" width="22" height="22" viewBox="0 0 22 22"><rect x="0.8" y="0.8" width="20.4" height="20.4" rx="2.5" fill="#fff" stroke="#2a3a4a" stroke-width="1.6"/>
<circle cx="11" cy="11" r="8" fill="#fff" stroke="#2a3a4a" stroke-width="1.5"/><path d="M8 5 V17 M11 4 V18 M14 5 V17" stroke="#ccc" stroke-width="0.5"/>
<path d="M11 11 L16 5.5 L12.2 12.2 Z" fill="#e83030"/><path d="M11 11 L6 16.5 L9.8 9.8 Z" fill="#202020"/></svg>
<svg style="left:881px;top:263px" width="20" height="19" viewBox="0 0 20 19"><path d="M10 0.5 L19 3.5 Q19.5 13 10 18.5 Q0.5 13 1 3.5 Z" fill="#9a9a9a"/><path d="M10 3 L16.5 5 Q16.5 12.5 10 16 Q3.5 12.5 3.5 5 Z" fill="#7a7a7a"/><path d="M10 0.5 L19 3.5 Q19.5 13 10 18.5" fill="none" stroke="#c0c0c0" stroke-width="0.8"/></svg>
<div class="t" style="left:867px;top:289px;font-size:11.5px;color:#707070;letter-spacing:-0.435px;">CSF Filter</div>
<div class="a" style="left:884px;top:303px;width:14px;height:23px;background:#f4f4f4"></div>
<svg style="left:885px;top:304px" width="12" height="7" viewBox="0 0 12 7"><path d="M0.5 3.5 H10 M7 0.8 L10.5 3.5 L7 6.2" fill="none" stroke="#333" stroke-width="1.3"/></svg>
<div class="t" style="left:884.5px;top:311px;font-size:15.5px;color:#585858;line-height:16px;transform:scaleX(0.85);transform-origin:left">N</div>
<svg style="left:882px;top:334px" width="19" height="19" viewBox="0 0 19 19"><rect width="19" height="19" fill="#fafafa"/><path d="M4 3 L12 1.5 L17.5 6 L15 13 L6 13 L2.5 8 Z" fill="#a8a8a8"/><path d="M4 3 L12 6 L17.5 6 M12 6 L6 13" stroke="#cfcfcf" stroke-width="0.7"/><text x="9.5" y="18" text-anchor="middle" font-family="Liberation Sans" font-weight="bold" font-size="6.8" fill="#333">HPR</text></svg>
<svg style="left:880px;top:360px" width="22" height="20" viewBox="0 0 22 20"><text x="11" y="6.5" text-anchor="middle" font-family="Liberation Sans" font-size="7" fill="#a8a8a8" letter-spacing="0.3">M3C2</text><path d="M3 12 Q11 8 19 10 L18 14 Q11 16 4 15 Z" fill="none" stroke="#999" stroke-width="0.7"/><circle cx="3" cy="9" r="1" fill="#555"/><circle cx="5" cy="12" r="1" fill="#555"/><circle cx="4" cy="15" r="1" fill="#555"/><circle cx="9" cy="11" r="1" fill="#555"/><circle cx="10" cy="14.5" r="1" fill="#555"/><circle cx="14" cy="10" r="1" fill="#555"/><circle cx="15" cy="13.5" r="1" fill="#555"/><circle cx="19" cy="11" r="1" fill="#555"/><circle cx="19" cy="15" r="1" fill="#555"/><circle cx="5" cy="18" r="1" fill="#555"/><circle cx="18" cy="18" r="1" fill="#555"/></svg>
<svg style="left:881px;top:388px" width="20" height="19" viewBox="0 0 20 19"><path d="M10 0.5 L19 3.5 Q19.5 13 10 18.5 Q0.5 13 1 3.5 Z" fill="#9a9a9a"/><path d="M10 3 L16.5 5 Q16.5 12.5 10 16 Q3.5 12.5 3.5 5 Z" fill="#7a7a7a"/><path d="M10 0.5 L19 3.5 Q19.5 13 10 18.5" fill="none" stroke="#c0c0c0" stroke-width="0.8"/></svg>
<svg style="left:881px;top:414.5px" width="20" height="20" viewBox="0 0 20 20"><rect width="20" height="20" fill="#6e6e6e"/><path d="M1 4 Q6 1 10 5 T19 3 M1 9 Q5 6 10 10 T19 8 M3 1 Q8 8 17 1" fill="none" stroke="#bbb" stroke-width="1"/><text x="10" y="18.5" text-anchor="middle" font-family="Liberation Sans" font-weight="bold" font-size="8" fill="#fff" letter-spacing="0.3">PCV</text></svg>
<svg style="left:881.5px;top:441.5px" width="19" height="19" viewBox="0 0 19 19"><rect width="19" height="19" fill="#fafafa"/><path d="M9.5 1 L18 7 L15 17 H4 L1 7 Z" fill="#9a9a9a"/><path d="M9.5 1 L18 7 L15 17" fill="none" stroke="#bbb" stroke-width="0.7"/></svg>
<svg style="left:881.5px;top:469px" width="19" height="19" viewBox="0 0 19 19"><rect width="19" height="19" fill="#fafafa"/><path d="M1 12 L5 6 Q7 2 11 2 Q16 3 15 8 L18 12 Z" fill="#a8a8a8"/><circle cx="11" cy="6" r="3.5" fill="#bcbcbc"/><text x="9.5" y="18.3" text-anchor="middle" font-family="Liberation Sans" font-size="8" fill="#333" letter-spacing="0.2">RSD</text></svg>
<svg style="left:880px;top:494px" width="22" height="22" viewBox="0 0 22 22"><circle cx="2" cy="2" r="1.5" fill="#c8c8c8"/><circle cx="8" cy="2" r="1.5" fill="#c8c8c8"/><circle cx="14" cy="2" r="1.5" fill="#c8c8c8"/><circle cx="20" cy="2" r="1.5" fill="#c8c8c8"/><circle cx="2" cy="8" r="1.5" fill="#c8c8c8"/><circle cx="8" cy="8" r="1.5" fill="#c8c8c8"/><circle cx="14" cy="8" r="1.5" fill="#f05020"/><circle cx="20" cy="8" r="1.5" fill="#f05020"/><circle cx="2" cy="14" r="1.5" fill="#c8c8c8"/><circle cx="8" cy="14" r="1.5" fill="#f05020"/><circle cx="14" cy="14" r="1.5" fill="#f05020"/><circle cx="20" cy="14" r="1.5" fill="#f05020"/><circle cx="2" cy="20" r="1.5" fill="#c8c8c8"/><circle cx="8" cy="20" r="1.5" fill="#c8c8c8"/><circle cx="14" cy="20" r="1.5" fill="#f05020"/><circle cx="20" cy="20" r="1.5" fill="#f05020"/><circle cx="14" cy="7.5" r="4.5" fill="none" stroke="#111" stroke-width="3.15" stroke-dasharray="2.48 2.48"/><circle cx="14" cy="7.5" r="3.38" fill="none" stroke="#111" stroke-width="1.3"/><circle cx="8.5" cy="15" r="3.5" fill="none" stroke="#111" stroke-width="2.45" stroke-dasharray="1.93 1.93"/><circle cx="8.5" cy="15" r="2.62" fill="none" stroke="#111" stroke-width="1.3"/></svg>
<svg style="left:880px;top:521px" width="22" height="22" viewBox="0 0 22 22"><path d="M11 12 L21 16 L11 21 L1 16 Z" fill="#a0a0a0" stroke="#777" stroke-width="0.6"/><path d="M11 7 L21 11 L11 16 L1 11 Z" fill="#c0c0c0" stroke="#777" stroke-width="0.7"/><path d="M11 1.5 L21 5.5 L11 10.5 L1 5.5 Z" fill="#e8e8e8" stroke="#666" stroke-width="0.7"/></svg>
<svg style="left:879.5px;top:552.5px" width="22" height="13" viewBox="0 0 22 13"><ellipse cx="11" cy="6.5" rx="10" ry="5.3" fill="none" stroke="#e05070" stroke-width="1.3"/><circle cx="11" cy="1.2" r="0.8" fill="#f8a0b0"/><circle cx="11" cy="11.8" r="0.8" fill="#f8a0b0"/></svg>
<div class="a" style="left:877px;top:572px;width:28px;height:26.5px;background:#cce4f7;border:1px solid #a8d0f0;border-radius:3px"></div>
<svg style="left:883.5px;top:578.5px" width="17" height="15" viewBox="0 0 17 15"><path d="M1.5 14 V6 Q1.5 1.2 8.5 1.2 Q15.5 1.2 15.5 6 V14 H11.5 V7.5 Q11.5 5.5 8.5 5.5 Q5.5 5.5 5.5 7.5 V14 Z" fill="#fff" stroke="#111" stroke-width="1.8" stroke-linejoin="round"/><path d="M3 4 Q4 1.5 8.5 1.5 Q13 1.5 14 4 Z" fill="#1a3ad0"/></svg>
<svg style="left:880px;top:602.5px" width="22" height="21" viewBox="0 0 22 21"><circle cx="2" cy="2" r="1.5" fill="#c8c8c8"/><circle cx="8" cy="2" r="1.5" fill="#c8c8c8"/><circle cx="14" cy="2" r="1.5" fill="#c8c8c8"/><circle cx="20" cy="2" r="1.5" fill="#c8c8c8"/><circle cx="2" cy="8" r="1.5" fill="#c8c8c8"/><circle cx="8" cy="8" r="1.5" fill="#c8c8c8"/><circle cx="14" cy="8" r="1.5" fill="#f05020"/><circle cx="20" cy="8" r="1.5" fill="#f05020"/><circle cx="2" cy="14" r="1.5" fill="#c8c8c8"/><circle cx="8" cy="14" r="1.5" fill="#f05020"/><circle cx="14" cy="14" r="1.5" fill="#c8c8c8"/><circle cx="20" cy="14" r="1.5" fill="#f05020"/><circle cx="2" cy="20" r="1.5" fill="#c8c8c8"/><circle cx="8" cy="20" r="1.5" fill="#c8c8c8"/><circle cx="14" cy="20" r="1.5" fill="#f05020"/><circle cx="20" cy="20" r="1.5" fill="#f05020"/><path d="M9 3 Q10.5 2 11 4 L11.5 9 Q13 8 14 9.5 L15 14 Q14.5 18 11 19.5 Q7 19.5 5.5 16 L4 12 Q4 10.5 6 11 L8 13 L8 4 Q8 3 9 3 Z" fill="#fdf6f0" stroke="#333" stroke-width="1"/></svg>
<svg style="left:879.5px;top:631px" width="23" height="19" viewBox="0 0 23 19"><path d="M2 11 Q1 6 5.5 6.5 Q7 1 12.5 1.5 Q17 2 17.5 6 Q22 6 21.5 11" fill="#f6f6f6" stroke="#a8a8a8" stroke-width="1.1"/><rect x="1" y="11" width="21" height="6.5" fill="#f4f4f4" stroke="#a0a0a0" stroke-width="1.1"/><path d="M4 11 V14 M7 11 V13 M10 11 V14 M13 11 V13 M16 11 V14 M19 11 V13" stroke="#a0a0a0" stroke-width="0.8"/></svg>
<div class="a" style="left:919.65px;top:710.25px;width:1.5px;height:1.5px;background:#a8a8a8"></div>
<div class="a" style="left:916.65px;top:712.85px;width:1.5px;height:1.5px;background:#a8a8a8"></div>
<div class="a" style="left:919.65px;top:712.85px;width:1.5px;height:1.5px;background:#a8a8a8"></div>
<div class="a" style="left:914.05px;top:715.45px;width:1.5px;height:1.5px;background:#a8a8a8"></div>
<div class="a" style="left:916.65px;top:715.45px;width:1.5px;height:1.5px;background:#a8a8a8"></div>
<div class="a" style="left:919.65px;top:715.45px;width:1.5px;height:1.5px;background:#a8a8a8"></div>
<div class="hdr" style="left:34px;top:579px;width:825px;height:17px"></div>
<div class="t" style="left:38px;top:582px;font-size:11.8px;color:#000;letter-spacing:-0.783px;">Console</div>
<svg style="left:825px;top:584px" width="10" height="10" viewBox="0 0 10 10"><rect x="3.6" y="1.6" width="4.6" height="4.2" fill="#b8b8b8" stroke="#111" stroke-width="1"/><rect x="3.1" y="1.1" width="5.6" height="1.3" fill="#111"/><rect x="1.6" y="4.4" width="5" height="4.6" fill="#eaeaea" stroke="#111" stroke-width="1"/><rect x="1.1" y="3.9" width="6" height="1.3" fill="#111"/></svg>
<svg style="left:845px;top:584px" width="9" height="9"><path d="M1 1 L8 8 M8 1 L1 8" stroke="#222" stroke-width="1.2"/></svg>
<div class="a" style="left:41px;top:606px;width:810px;height:87px;background:#fff;border:1px solid #a3a3a3"></div>
<div class="a" style="left:42px;top:607px;width:793px;height:15.5px;background:#fff"></div>
<div class="a" style="left:42px;top:622.5px;width:793px;height:15.3px;background:#f4f4f4"></div>
<div class="a" style="left:42px;top:637.8px;width:793px;height:15.5px;background:#fff"></div>
<div class="a" style="left:42px;top:653.3px;width:793px;height:15.5px;background:#f4f4f4"></div>
<div class="a" style="left:42px;top:668.8px;width:793px;height:23px;background:#fff"></div>
<div class="a" style="left:835px;top:607px;width:15px;height:85px;background:#f0f0f0"></div>
<div class="a" style="left:841px;top:660px;width:2px;height:16px;background:#8a8a8a;border-radius:1px"></div>
<div class="t" style="left:46.5px;top:609.0px;font-size:11.5px;color:#a82a35;letter-spacing:-0.437px;">[18:39:49] [qRansacSD] Skipping shape, did not meet minimum point requirement</div>
<div class="t" style="left:46.5px;top:624.3px;font-size:11.5px;color:#a82a35;letter-spacing:-0.435px;">[18:39:49] [qRansacSD] Input cloud has been automtically hidden!</div>
<div class="t" style="left:46.5px;top:639.6px;font-size:11.5px;color:#1e1e1e;letter-spacing:-0.452px;">[18:41:08] Default point size is already at minimum : 1</div>
<div class="t" style="left:46.5px;top:654.9px;font-size:11.5px;color:#1e1e1e;letter-spacing:-0.452px;">[18:41:08] Default point size is already at minimum : 1</div>
<div class="t" style="left:46.5px;top:670.2px;font-size:11.5px;color:#1e1e1e;letter-spacing:-0.452px;">[18:41:09] Default point size is already at minimum : 1</div>
</body></html>
